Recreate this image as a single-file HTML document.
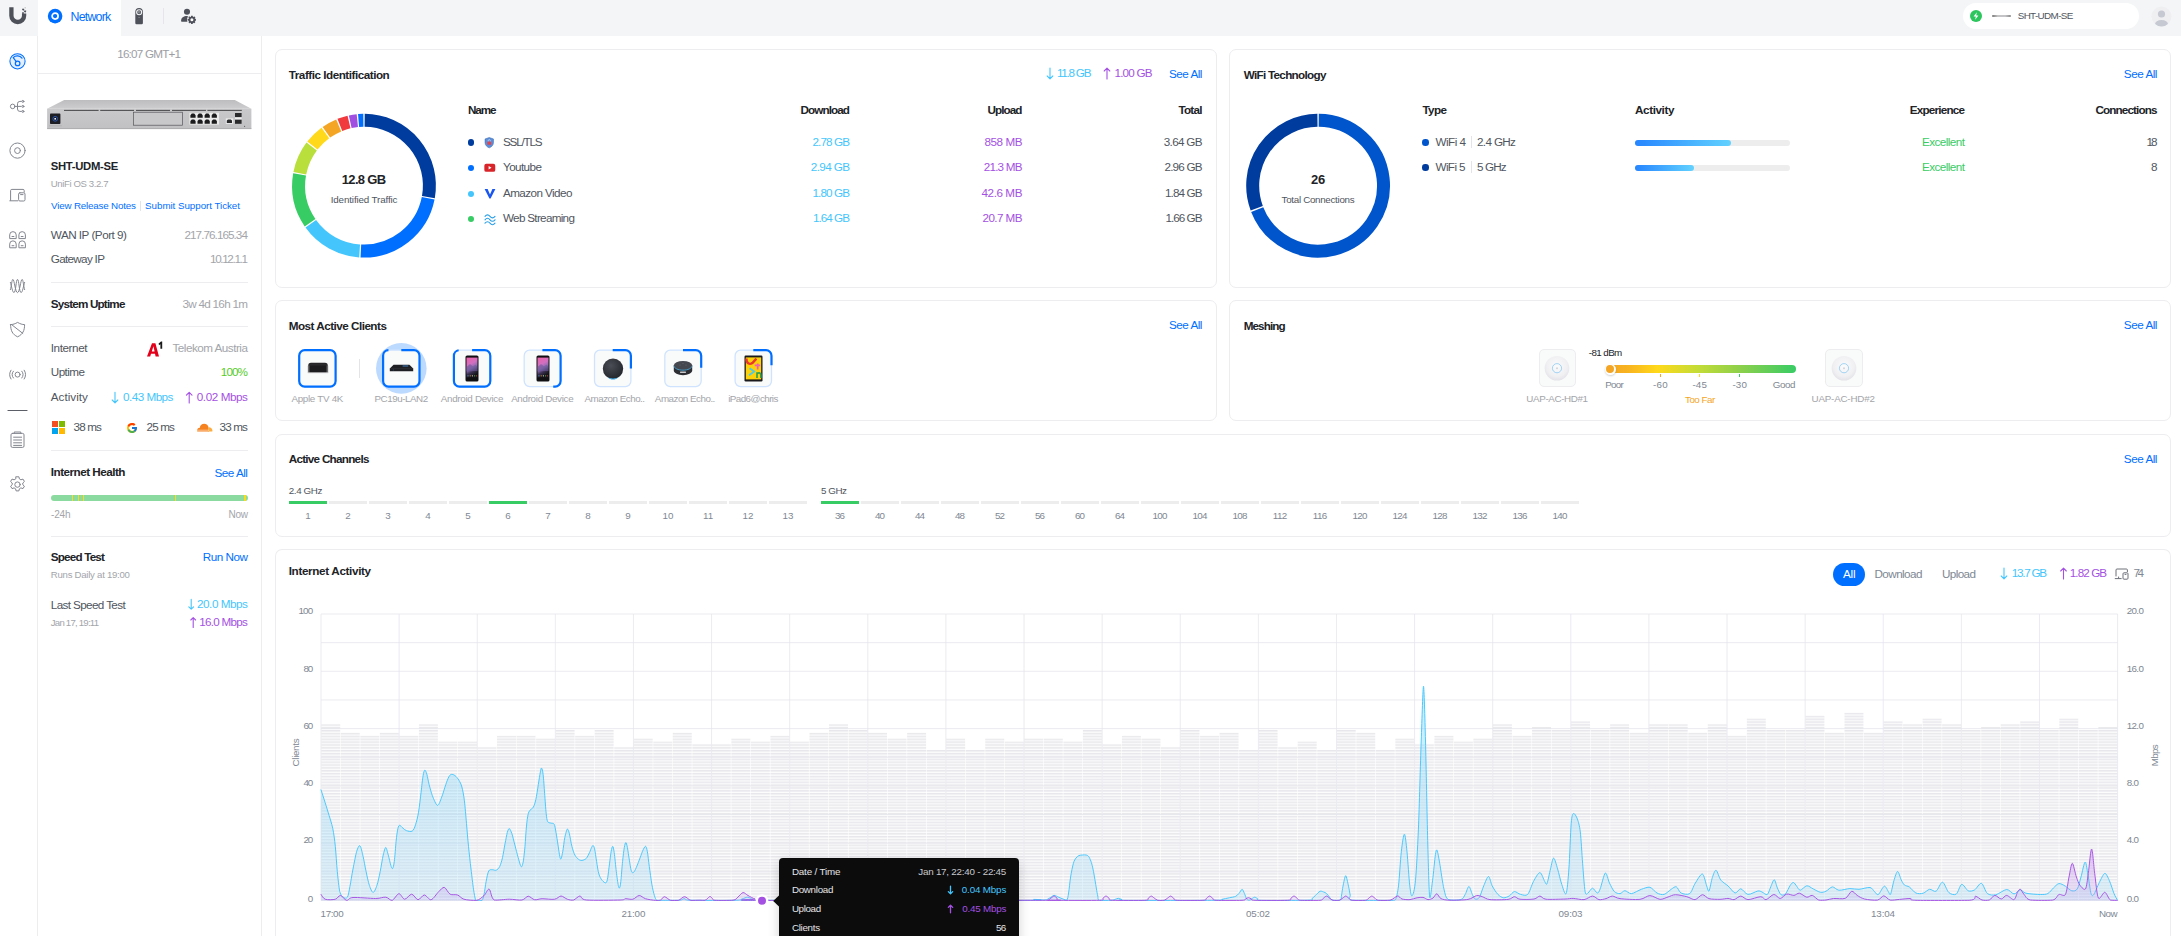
<!DOCTYPE html>
<html><head><meta charset="utf-8"><title>UniFi Network</title>
<style>
html,body{margin:0;padding:0;}
body{width:2181px;height:936px;overflow:hidden;background:#fff;position:relative;font-family:"Liberation Sans",sans-serif;}
.t{position:absolute;white-space:nowrap;line-height:1;}
.a{position:absolute;}
.card{position:absolute;border:1px solid #ededf0;border-radius:7px;box-sizing:border-box;background:#fff;}
.hr{position:absolute;height:1px;background:#ededf0;}
svg{position:absolute;overflow:visible;}
</style></head><body>
<div class="a" style="left:0;top:0;width:2181px;height:36px;background:#f4f5f7"></div>
<div class="a" style="left:38px;top:0;width:83px;height:36px;background:#fff"></div>
<svg style="left:0;top:0" width="38" height="36" viewBox="0 0 38 36">
<path d="M11.400 7.300V15.650a6.350 6.350 0 0 0 12.700 0V13.600" fill="none" stroke="#4e505a" stroke-width="4.300"/>
<rect x="22.300" y="8.700" width="1.900" height="1.700" fill="#4e505a" transform="rotate(35 23.2 9.500)"/><rect x="24.200" y="10.400" width="1.900" height="1.900" fill="#4e505a" transform="rotate(20 25.1 11.300)"/><rect x="22.100" y="12.300" width="1.800" height="1.500" fill="#4e505a"/><rect x="24.600" y="7.200" width="1.200" height="1.200" fill="#4e505a" opacity=".35"/>
</svg>
<svg style="left:46px;top:7px" width="18" height="18" viewBox="0 0 18 18"><circle cx="9.1" cy="9.1" r="7.3" fill="#006fff"/><circle cx="9.1" cy="9.1" r="3.0" fill="none" stroke="#fff" stroke-width="1.7"/></svg>
<span class="t" style="left:70.50px;top:10px;line-height:14px;height:14px;font-size:12.4px;color:#006fff;letter-spacing:-0.796px;">Network</span>
<svg style="left:132px;top:6px" width="14" height="20" viewBox="132 6 14 20"><path d="M135.300 23V11.700a3.800 3.800 0 0 1 7.600 0V23a1.200 1.200 0 0 1-1.200 1.200h-5.200a1.200 1.200 0 0 1-1.200-1.200z" fill="#4e505a"/><circle cx="139.150" cy="12.200" r="2.500" fill="none" stroke="#f4f5f7" stroke-width="1.100"/><circle cx="139.150" cy="12.200" r="0.900" fill="none" stroke="#c9cace" stroke-width=".5"/><rect x="138.200" y="17.300" width="1.900" height=".6" fill="#8a8c94"/></svg>
<div class="a" style="left:163px;top:8px;width:1px;height:16px;background:#e6e6ea"></div>
<svg style="left:179px;top:7px" width="18" height="18" viewBox="179 7 18 18"><circle cx="187" cy="11.750" r="3.050" fill="#4e505a"/><path d="M181.100 20.600c.1-2.900 2.600-4.500 5.900-4.500 1.300 0 2.400.2 3.300.7l-1.600 4.900h-7.200c-.3 0-.4-.5-.4-1.100z" fill="#4e505a"/><circle cx="191.900" cy="19.800" r="4.900" fill="#f4f5f7"/><circle cx="191.900" cy="19.800" r="3.100" fill="#4e505a"/><rect x="190.950" y="15.700" width="1.900" height="8.200" rx=".3" fill="#4e505a" transform="rotate(0 191.9 19.800)"/><rect x="190.950" y="15.700" width="1.900" height="8.200" rx=".3" fill="#4e505a" transform="rotate(45 191.9 19.800)"/><rect x="190.950" y="15.700" width="1.900" height="8.200" rx=".3" fill="#4e505a" transform="rotate(90 191.9 19.800)"/><rect x="190.950" y="15.700" width="1.900" height="8.200" rx=".3" fill="#4e505a" transform="rotate(135 191.9 19.800)"/><circle cx="191.900" cy="19.800" r="1.500" fill="#fff"/></svg>
<div class="a" style="left:1963px;top:3px;width:176px;height:26px;border-radius:13px;background:#fff"></div>
<svg style="left:1969px;top:9px" width="14" height="14" viewBox="0 0 14 14"><circle cx="7" cy="7" r="6" fill="#2cc55e"/><path d="M7.8 3.2L4.6 7.6h2.2L6.2 10.8 9.4 6.4H7.2z" fill="#fff"/></svg>
<div class="a" style="left:1992px;top:14.5px;width:19px;height:2.6px;border-radius:1px;background:linear-gradient(90deg,#777,#c4c4c6 30%,#c4c4c6 70%,#888)"></div>
<span class="t" style="left:2017.70px;top:10px;line-height:11px;height:11px;font-size:9.9px;color:#50565e;letter-spacing:-0.644px;">SHT-UDM-SE</span>
<svg style="left:2151px;top:6px" width="21" height="21" viewBox="0 0 21 21"><defs><clipPath id="av"><circle cx="10.5" cy="10.5" r="10"/></clipPath></defs><circle cx="10.5" cy="10.5" r="10" fill="#efeff2"/><g clip-path="url(#av)"><circle cx="10.5" cy="8" r="3.6" fill="#c6c9d2"/><ellipse cx="10.5" cy="18.6" rx="6.6" ry="4.6" fill="#c6c9d2"/></g></svg>
<div class="a" style="left:37px;top:36px;width:1px;height:900px;background:#ededf0"></div>
<svg style="left:0;top:36px" width="37" height="900" viewBox="0 36 37 900" fill="none" stroke="#83868f" stroke-width="1" stroke-linecap="round" stroke-linejoin="round">
<!-- dashboard (active) -->
<circle cx="17.5" cy="61.3" r="7.6" fill="#e3efff" stroke="#006fff" stroke-width="1.05"/>
<circle cx="17.6" cy="63.4" r="2.3" stroke="#006fff" stroke-width="1.2"/>
<path d="M16.2 61.6l-2.6-3.4M13.2 57.6a6 6 0 0 1 8.8 0.6" stroke="#006fff" stroke-width="1.2"/>
<!-- topology -->
<circle cx="12.700" cy="106.400" r="2.300"/><path d="M15 106.400h6M17.500 106.400v-2.600a2.400 2.400 0 0 1 2.400-2.400h1.400M17.500 106.400v2.600a2.400 2.400 0 0 0 2.400 2.400h1.400"/>
<circle cx="22.900" cy="101.400" r="1"/><circle cx="22.900" cy="106.400" r="1"/><circle cx="22.900" cy="111.400" r="1"/>
<!-- devices -->
<circle cx="17.5" cy="150.6" r="7.6"/><circle cx="17.5" cy="150.6" r="2.9"/>
<!-- clients -->
<path d="M10.600 200.400v-9.800a1.200 1.200 0 0 1 1.200-1.200h11.200a1.200 1.200 0 0 1 1.200 1.200v1.600M9.800 200.800h8"/><rect x="18.600" y="192.800" width="6.400" height="8.200" rx="1.300"/><path d="M20.600 194.600h2.400"/>
<!-- ports grid -->
<g><path d="M9.700 238.200v-3.300a3.250 3.250 0 0 1 6.500 0v3.300zM18.900 238.200v-3.300a3.250 3.250 0 0 1 6.500 0v3.300zM9.700 247.400v-3.300a3.250 3.250 0 0 1 6.500 0v3.300zM18.900 247.400v-3.300a3.250 3.250 0 0 1 6.500 0v3.300z"/><path d="M12 236.500h1.900M21.200 236.500h1.900M12 245.700h1.900M21.200 245.700h1.900"/></g>
<!-- stats waves -->
<path d="M10.400 289.600c1.200-3.600 1.400-10.200 2.500-10.200 1.400 0 2.400 13.200 4.600 13.200s3.200-13.200 4.600-13.200c1.100 0 1.300 6.600 2.500 10.200M10.400 282.400c1.200 3.600 2 10.200 3.600 10.200 1.800 0 2-13.200 3.500-13.200s1.700 13.200 3.500 13.200c1.600 0 2.400-6.600 3.600-10.200"/>
<!-- shield -->
<path d="M10.6 324.6c2.4 0 4.6-.8 7-2.2 2.4 1.4 4.600 2.200 7 2.200 0 6-1.800 9.800-7 12.200-5.200-2.400-7-6.200-7-12.200zM11.600 324.600l11.200 8.800"/>
<!-- radio -->
<circle cx="17.600" cy="374.600" r="2.500"/><path d="M13.400 371.200a5.400 5.400 0 0 0 0 6.800M11 370.200a8 8 0 0 0 0 8.800M21.800 371.200a5.400 5.400 0 0 1 0 6.800M24.200 370.200a8 8 0 0 1 0 8.800"/>
<!-- divider -->
<path d="M8 410.500h19" stroke="#5b5e66" stroke-width="1.2"/>
<!-- logs -->
<rect x="11" y="433.400" width="13" height="14" rx="1.400"/><path d="M14.200 433.400v-1.400h6.600v1.400M13.600 437.200h8M13.600 440h8M13.600 442.800h8M13.600 445.400h8"/>
<!-- settings gear -->
<circle cx="17.500" cy="484.600" r="2.700"/>
<path d="M16.100 476.800h2.800l.5 2.100 1.500.9 2.100-.7 1.400 2.400-1.600 1.500v1.700l1.600 1.500-1.400 2.400-2.100-.7-1.500.9-.5 2.100h-2.800l-.5-2.100-1.500-.9-2.100.7-1.400-2.400 1.600-1.500v-1.700l-1.600-1.500 1.400-2.400 2.100.7 1.500-.9z"/>
</svg>
<div class="a" style="left:261px;top:36px;width:1px;height:900px;background:#ededf0"></div>
<div class="hr" style="left:38px;top:73px;width:223px"></div>
<span class="t" style="left:117.20px;top:47px;line-height:13px;height:13px;font-size:11.7px;color:#9c9ea4;letter-spacing:-0.786px;">16:07 GMT+1</span>
<svg style="left:44px;top:96px" width="212" height="38" viewBox="44 96 212 38">
<defs><linearGradient id="dvt" x1="0" y1="0" x2="0" y2="1"><stop offset="0" stop-color="#bdbdbf"/><stop offset="1" stop-color="#cdcdcf"/></linearGradient>
<linearGradient id="dvf" x1="0" y1="0" x2="0" y2="1"><stop offset="0" stop-color="#c9c9cb"/><stop offset="1" stop-color="#c1c1c3"/></linearGradient></defs>
<path d="M64.200 100.100H234.800L251.400 108.700H47.100z" fill="url(#dvt)"/>
<rect x="47.100" y="108.700" width="204.300" height="20.100" fill="url(#dvf)"/>
<rect x="47.100" y="128.200" width="204.300" height="0.900" fill="#a9a9ab"/>
<g fill="#3a3a3c"><rect x="64" y="109.900" width="34.600" height="0.900"/><rect x="100.200" y="109.900" width="33.800" height="0.900"/><rect x="136" y="109.900" width="34" height="0.900"/><rect x="172" y="109.900" width="34" height="0.900"/><rect x="207.400" y="109.900" width="34.400" height="0.900"/></g>
<rect x="50" y="113.600" width="10.400" height="10.400" rx="0.800" fill="#1d1d24"/><circle cx="55.200" cy="118.800" r="2.400" fill="none" stroke="#2b5fc9" stroke-width="0.800"/><rect x="54.400" y="118" width="1.600" height="1.600" fill="#e8eefc"/>
<rect x="49.200" y="125.200" width="12.600" height="1.200" fill="#b3b3b6"/>
<rect x="133.600" y="112.200" width="49" height="13" fill="#c8c8ca" stroke="#55555a" stroke-width="0.700"/>
<rect x="189.400" y="112.800" width="29.600" height="11.800" fill="#e9e9ea"/>
<g fill="#1b1b1d"><path d="M190.400 117.800v-2.600l1.400-1.600h2.400l1.400 1.600v2.600zM197.500 117.800v-2.600l1.400-1.600h2.400l1.400 1.600v2.600zM204.600 117.800v-2.600l1.400-1.600h2.400l1.400 1.600v2.600zM211.700 117.800v-2.600l1.400-1.600h2.400l1.400 1.600v2.600z"/>
<path d="M190.400 123.700v-2.600l1.400-1.600h2.400l1.400 1.600v2.600zM197.500 123.700v-2.600l1.400-1.600h2.400l1.400 1.600v2.600zM204.600 123.700v-2.600l1.400-1.600h2.400l1.400 1.600v2.600zM211.700 123.700v-2.600l1.400-1.600h2.400l1.400 1.600v2.600z"/></g>
<rect x="225.800" y="118.400" width="7.400" height="5.400" fill="#eeeeef"/><path d="M226.800 123v-2.400l1.200-1.200h2.800l1.200 1.200v2.400z" fill="#2a2a2c"/>
<rect x="235" y="113" width="6.600" height="4" fill="#2a2a2c"/><rect x="235" y="117.600" width="6.600" height="1.400" fill="#efeff0"/><rect x="235" y="119.800" width="6.600" height="4" fill="#2a2a2c"/>
<circle cx="244.600" cy="126.200" r="0.500" fill="#333"/>
</svg>
<span class="t" style="left:50.80px;top:160px;line-height:12px;height:12px;font-size:11.3px;color:#212327;font-weight:700;letter-spacing:-0.323px;">SHT-UDM-SE</span>
<span class="t" style="left:50.80px;top:178px;line-height:11px;height:11px;font-size:9.6px;color:#a3a5aa;letter-spacing:-0.404px;">UniFi OS 3.2.7</span>
<span class="t" style="left:51.00px;top:200px;line-height:11px;height:11px;font-size:9.8px;color:#006fff;letter-spacing:-0.180px;">View Release Notes</span>
<div class="a" style="left:140px;top:201px;width:1px;height:10px;background:#e3e4e8"></div>
<span class="t" style="left:145.10px;top:200px;line-height:11px;height:11px;font-size:9.8px;color:#006fff;letter-spacing:-0.048px;">Submit Support Ticket</span>
<span class="t" style="left:50.80px;top:228px;line-height:13px;height:13px;font-size:11.7px;color:#50565e;letter-spacing:-0.501px;">WAN IP (Port 9)</span>
<span class="t" style="left:184.50px;top:228px;line-height:13px;height:13px;font-size:11.7px;color:#a3a5aa;letter-spacing:-0.943px;">217.76.165.34</span>
<span class="t" style="left:50.80px;top:252px;line-height:13px;height:13px;font-size:11.7px;color:#50565e;letter-spacing:-0.697px;">Gateway IP</span>
<span class="t" style="left:210.00px;top:252px;line-height:13px;height:13px;font-size:11.7px;color:#a3a5aa;letter-spacing:-1.349px;">10.12.1.1</span>
<div class="hr" style="left:51px;top:282px;width:197px"></div>
<span class="t" style="left:50.80px;top:297px;line-height:13px;height:13px;font-size:11.7px;color:#212327;font-weight:700;letter-spacing:-0.819px;">System Uptime</span>
<span class="t" style="left:182.50px;top:297px;line-height:13px;height:13px;font-size:11.7px;color:#a3a5aa;letter-spacing:-0.726px;">3w 4d 16h 1m</span>
<div class="hr" style="left:51px;top:326px;width:197px"></div>
<span class="t" style="left:50.80px;top:341px;line-height:13px;height:13px;font-size:11.7px;color:#50565e;letter-spacing:-0.425px;">Internet</span>
<svg style="left:146px;top:340px" width="18" height="18" viewBox="0 0 18 18"><path d="M1 16.400L6 3.200h3.400l3.600 13.200H9.600l-.6-2.600H5l-.8 2.600zM5.800 11.400h2.800L7.400 6.200z" fill="#e2001a"/><path d="M12.600 3.600l2.400-2h1.200v7.200h-1.800V4.200l-1.400 1z" fill="#1a1a1a"/></svg>
<span class="t" style="left:172.50px;top:341px;line-height:13px;height:13px;font-size:11.7px;color:#a3a5aa;letter-spacing:-0.506px;">Telekom Austria</span>
<span class="t" style="left:50.80px;top:365px;line-height:13px;height:13px;font-size:11.7px;color:#50565e;letter-spacing:-0.572px;">Uptime</span>
<span class="t" style="left:220.80px;top:365px;line-height:13px;height:13px;font-size:11.7px;color:#56cc1e;letter-spacing:-0.908px;">100%</span>
<span class="t" style="left:50.80px;top:390px;line-height:13px;height:13px;font-size:11.7px;color:#50565e;letter-spacing:0.021px;">Activity</span>
<svg style="left:0;top:0" width="1" height="1"><path d="M115 392.2V402.7M112.2 400.0L115 402.8L117.8 400.0" fill="none" stroke="#44c6fd" stroke-width="1.1" stroke-linecap="round" stroke-linejoin="round"/></svg>
<span class="t" style="left:123.00px;top:390px;line-height:13px;height:13px;font-size:11.7px;color:#44c6fd;letter-spacing:-0.516px;">0.43 Mbps</span>
<svg style="left:0;top:0" width="1" height="1"><path d="M189.2 403V392.5M186.39999999999998 395.2L189.2 392.4L192.0 395.2" fill="none" stroke="#a451e3" stroke-width="1.1" stroke-linecap="round" stroke-linejoin="round"/></svg>
<span class="t" style="left:196.80px;top:390px;line-height:13px;height:13px;font-size:11.7px;color:#a451e3;letter-spacing:-0.429px;">0.02 Mbps</span>
<svg style="left:52px;top:421px" width="13" height="13" viewBox="0 0 13 13"><rect x="0" y="0" width="6" height="6" fill="#f25022"/><rect x="7" y="0" width="6" height="6" fill="#7fba00"/><rect x="0" y="7" width="6" height="6" fill="#00a4ef"/><rect x="7" y="7" width="6" height="6" fill="#ffb900"/></svg>
<span class="t" style="left:73.50px;top:420px;line-height:13px;height:13px;font-size:11.7px;color:#50565e;letter-spacing:-0.840px;">38 ms</span>
<svg style="left:126px;top:422px" width="12" height="12" viewBox="0 0 48 48"><path fill="#FFC107" d="M43.600 20.100H42V20H24v8h11.300c-1.600 4.700-6.100 8-11.300 8-6.600 0-12-5.400-12-12s5.400-12 12-12c3.100 0 5.800 1.200 8 3l5.700-5.700C34 6.100 29.300 4 24 4 13 4 4 13 4 24s9 20 20 20 20-9 20-20c0-1.300-.1-2.700-.4-3.900z"/><path fill="#FF3D00" d="M6.300 14.700l6.600 4.800C14.700 15.100 19 12 24 12c3.100 0 5.800 1.200 8 3l5.700-5.700C34 6.100 29.300 4 24 4 16.300 4 9.700 8.300 6.300 14.700z"/><path fill="#4CAF50" d="M24 44c5.200 0 9.900-2 13.400-5.200l-6.200-5.200c-2 1.500-4.500 2.400-7.200 2.400-5.200 0-9.600-3.300-11.300-7.900l-6.500 5C9.500 39.600 16.200 44 24 44z"/><path fill="#1976D2" d="M43.600 20.100H42V20H24v8h11.300c-.8 2.200-2.200 4.200-4.100 5.600l6.200 5.200C37 39.200 44 34 44 24c0-1.300-.1-2.700-.4-3.900z"/></svg>
<span class="t" style="left:146.50px;top:420px;line-height:13px;height:13px;font-size:11.7px;color:#50565e;letter-spacing:-0.840px;">25 ms</span>
<svg style="left:196px;top:421px" width="18" height="12" viewBox="0 0 18 12"><path d="M1.200 10.400c-.6-2 .8-3.600 2.600-3.600.2-2.400 2.200-4 4.400-4 2 0 3.600 1.200 4.200 3l.6 4.600z" fill="#f6821f"/><path d="M12.600 6.200c1.800-.2 3.400 1 3.800 2.800.1.500.1 1-.1 1.400h-4.500z" fill="#fbad41"/><path d="M0.800 9.200h12.400" stroke="#fff" stroke-width="0.500"/></svg>
<span class="t" style="left:219.50px;top:420px;line-height:13px;height:13px;font-size:11.7px;color:#50565e;letter-spacing:-0.840px;">33 ms</span>
<div class="hr" style="left:51px;top:450px;width:197px"></div>
<span class="t" style="left:50.80px;top:465px;line-height:13px;height:13px;font-size:11.7px;color:#212327;font-weight:700;letter-spacing:-0.515px;">Internet Health</span>
<span class="t" style="left:214.50px;top:466px;line-height:13px;height:13px;font-size:11.7px;color:#006fff;letter-spacing:-0.488px;">See All</span>
<div class="a" style="left:51px;top:495px;width:197px;height:6px;border-radius:3px;background:#8bdba0;overflow:hidden"><i class="a" style="left:21px;top:0;width:1px;height:6px;background:#ffd91a"></i><i class="a" style="left:27px;top:0;width:1px;height:6px;background:#ffd91a"></i><i class="a" style="left:32px;top:0;width:1px;height:6px;background:#ffd91a"></i><i class="a" style="left:124px;top:0;width:1px;height:6px;background:#ffd91a"></i><i class="a" style="left:192.500px;top:0;width:2px;height:6px;background:#ffd91a"></i></div>
<span class="t" style="left:51.00px;top:509px;line-height:11px;height:11px;font-size:10px;color:#a3a5aa;letter-spacing:-0.171px;">-24h</span>
<span class="t" style="left:228.50px;top:509px;line-height:11px;height:11px;font-size:10px;color:#a3a5aa;letter-spacing:-0.252px;">Now</span>
<div class="hr" style="left:51px;top:536px;width:197px"></div>
<span class="t" style="left:50.80px;top:550px;line-height:13px;height:13px;font-size:11.7px;color:#212327;font-weight:700;letter-spacing:-0.816px;">Speed Test</span>
<span class="t" style="left:202.80px;top:550px;line-height:13px;height:13px;font-size:11.7px;color:#006fff;letter-spacing:-0.486px;">Run Now</span>
<span class="t" style="left:50.80px;top:569px;line-height:11px;height:11px;font-size:9.6px;color:#a3a5aa;letter-spacing:-0.254px;">Runs Daily at 19:00</span>
<span class="t" style="left:50.80px;top:598px;line-height:13px;height:13px;font-size:11.7px;color:#50565e;letter-spacing:-0.621px;">Last Speed Test</span>
<svg style="left:0;top:0" width="1" height="1"><path d="M191.2 599.4V609.1M188.79999999999998 606.8L191.2 609.1999999999999L193.6 606.8" fill="none" stroke="#44c6fd" stroke-width="1.1" stroke-linecap="round" stroke-linejoin="round"/></svg>
<span class="t" style="left:197.00px;top:597px;line-height:13px;height:13px;font-size:11.7px;color:#44c6fd;letter-spacing:-0.454px;">20.0 Mbps</span>
<span class="t" style="left:50.80px;top:617px;line-height:11px;height:11px;font-size:9.6px;color:#a3a5aa;letter-spacing:-0.772px;">Jan 17, 19:11</span>
<svg style="left:0;top:0" width="1" height="1"><path d="M193.2 627.4V617.6999999999999M190.79999999999998 620.0L193.2 617.6L195.6 620.0" fill="none" stroke="#a451e3" stroke-width="1.1" stroke-linecap="round" stroke-linejoin="round"/></svg>
<span class="t" style="left:199.30px;top:615px;line-height:13px;height:13px;font-size:11.7px;color:#a451e3;letter-spacing:-0.741px;">16.0 Mbps</span>
<div class="card" style="left:275px;top:49px;width:942px;height:239px;"></div>
<div class="card" style="left:1229px;top:49px;width:942px;height:239px;"></div>
<div class="card" style="left:275px;top:300px;width:942px;height:121px;"></div>
<div class="card" style="left:1229px;top:300px;width:942px;height:121px;"></div>
<div class="card" style="left:275px;top:434px;width:1896px;height:103px;"></div>
<div class="card" style="left:275px;top:549px;width:1896px;height:400px;border-bottom:none;border-radius:7px 7px 0 0;"></div>
<span class="t" style="left:288.80px;top:68px;line-height:13px;height:13px;font-size:11.7px;color:#212327;font-weight:700;letter-spacing:-0.483px;">Traffic Identification</span>
<svg style="left:0;top:0" width="1" height="1"><path d="M1050 68V78.7M1047.2 76.0L1050 78.8L1052.8 76.0" fill="none" stroke="#44c6fd" stroke-width="1.1" stroke-linecap="round" stroke-linejoin="round"/></svg>
<span class="t" style="left:1057.00px;top:66px;line-height:13px;height:13px;font-size:11.7px;color:#44c6fd;letter-spacing:-1.259px;">11.8 GB</span>
<svg style="left:0;top:0" width="1" height="1"><path d="M1107 79V68.3M1104.2 71.0L1107 68.2L1109.8 71.0" fill="none" stroke="#a451e3" stroke-width="1.1" stroke-linecap="round" stroke-linejoin="round"/></svg>
<span class="t" style="left:1114.50px;top:66px;line-height:13px;height:13px;font-size:11.7px;color:#a451e3;letter-spacing:-0.821px;">1.00 GB</span>
<span class="t" style="left:1169.00px;top:67px;line-height:13px;height:13px;font-size:11.7px;color:#006fff;letter-spacing:-0.488px;">See All</span>
<svg style="left:0;top:0" width="1" height="1" fill="none" stroke-width="13"><path d="M364.63 120.30A65.4 65.4 0 0 1 428.40 197.11" stroke="#003c9e"/><path d="M428.17 198.35A65.4 65.4 0 0 1 360.86 251.02" stroke="#006fff"/><path d="M359.61 250.95A65.4 65.4 0 0 1 310.79 223.72" stroke="#44c6fd"/><path d="M310.07 222.70A65.4 65.4 0 0 1 299.58 174.40" stroke="#38cc65"/><path d="M299.81 173.17A65.4 65.4 0 0 1 311.67 146.48" stroke="#b8df3c"/><path d="M312.43 145.48A65.4 65.4 0 0 1 325.33 132.96" stroke="#ffd91a"/><path d="M326.35 132.23A65.4 65.4 0 0 1 338.71 125.39" stroke="#f5a524"/><path d="M339.87 124.91A65.4 65.4 0 0 1 349.01 122.04" stroke="#f03a3e"/><path d="M350.24 121.76A65.4 65.4 0 0 1 357.33 120.64" stroke="#a04fe0"/><path d="M358.58 120.52A65.4 65.4 0 0 1 363.37 120.30" stroke="#006fff"/></svg>
<span class="t" style="left:341.80px;top:172px;line-height:15px;height:15px;font-size:13px;color:#212327;font-weight:700;letter-spacing:-0.668px;">12.8 GB</span>
<span class="t" style="left:330.70px;top:194px;line-height:11px;height:11px;font-size:9.8px;color:#50565e;letter-spacing:-0.129px;">Identified Traffic</span>
<span class="t" style="left:468.00px;top:103px;line-height:13px;height:13px;font-size:11.7px;color:#212327;font-weight:700;letter-spacing:-1.122px;">Name</span>
<span class="t" style="left:800.50px;top:103px;line-height:13px;height:13px;font-size:11.7px;color:#212327;font-weight:700;letter-spacing:-0.913px;">Download</span>
<span class="t" style="left:987.50px;top:103px;line-height:13px;height:13px;font-size:11.7px;color:#212327;font-weight:700;letter-spacing:-0.929px;">Upload</span>
<span class="t" style="left:1178.50px;top:103px;line-height:13px;height:13px;font-size:11.7px;color:#212327;font-weight:700;letter-spacing:-0.769px;">Total</span>
<div class="a" style="left:467.800px;top:139.25px;width:6.500px;height:6.500px;border-radius:50%;background:#003c9e"></div>
<span class="t" style="left:503.00px;top:135px;line-height:13px;height:13px;font-size:11.7px;color:#50565e;letter-spacing:-1.220px;">SSL/TLS</span>
<span class="t" style="left:812.50px;top:135px;line-height:13px;height:13px;font-size:11.7px;color:#44c6fd;letter-spacing:-0.904px;">2.78 GB</span>
<span class="t" style="left:984.50px;top:135px;line-height:13px;height:13px;font-size:11.7px;color:#a451e3;letter-spacing:-0.464px;">858 MB</span>
<span class="t" style="left:1163.80px;top:135px;line-height:13px;height:13px;font-size:11.7px;color:#50565e;letter-spacing:-0.704px;">3.64 GB</span>
<div class="a" style="left:467.800px;top:164.85px;width:6.500px;height:6.500px;border-radius:50%;background:#006fff"></div>
<span class="t" style="left:503.00px;top:160px;line-height:13px;height:13px;font-size:11.7px;color:#50565e;letter-spacing:-0.586px;">Youtube</span>
<span class="t" style="left:810.80px;top:160px;line-height:13px;height:13px;font-size:11.7px;color:#44c6fd;letter-spacing:-0.621px;">2.94 GB</span>
<span class="t" style="left:983.80px;top:160px;line-height:13px;height:13px;font-size:11.7px;color:#a451e3;letter-spacing:-0.812px;">21.3 MB</span>
<span class="t" style="left:1164.50px;top:160px;line-height:13px;height:13px;font-size:11.7px;color:#50565e;letter-spacing:-0.821px;">2.96 GB</span>
<div class="a" style="left:467.800px;top:190.55px;width:6.500px;height:6.500px;border-radius:50%;background:#44c6fd"></div>
<span class="t" style="left:503.00px;top:186px;line-height:13px;height:13px;font-size:11.7px;color:#50565e;letter-spacing:-0.580px;">Amazon Video</span>
<span class="t" style="left:812.50px;top:186px;line-height:13px;height:13px;font-size:11.7px;color:#44c6fd;letter-spacing:-0.904px;">1.80 GB</span>
<span class="t" style="left:981.50px;top:186px;line-height:13px;height:13px;font-size:11.7px;color:#a451e3;letter-spacing:-0.428px;">42.6 MB</span>
<span class="t" style="left:1165.00px;top:186px;line-height:13px;height:13px;font-size:11.7px;color:#50565e;letter-spacing:-0.904px;">1.84 GB</span>
<div class="a" style="left:467.800px;top:215.95px;width:6.500px;height:6.500px;border-radius:50%;background:#38cc65"></div>
<span class="t" style="left:503.00px;top:211px;line-height:13px;height:13px;font-size:11.7px;color:#50565e;letter-spacing:-0.701px;">Web Streaming</span>
<span class="t" style="left:813.00px;top:211px;line-height:13px;height:13px;font-size:11.7px;color:#44c6fd;letter-spacing:-0.987px;">1.64 GB</span>
<span class="t" style="left:982.50px;top:211px;line-height:13px;height:13px;font-size:11.7px;color:#a451e3;letter-spacing:-0.595px;">20.7 MB</span>
<span class="t" style="left:1165.50px;top:211px;line-height:13px;height:13px;font-size:11.7px;color:#50565e;letter-spacing:-0.987px;">1.66 GB</span>
<svg style="left:484.300px;top:136.600px" width="10.500" height="11.400" viewBox="0 0 12 13"><path d="M6 .6l4.800 1.600v4.200c0 3-2.200 5-4.800 6-2.600-1-4.800-3-4.800-6V2.200z" fill="#5b8fd9" stroke="#2f5fae" stroke-width=".6"/><rect x="3.800" y="5" width="4.400" height="3.800" rx=".6" fill="#e0454b"/><path d="M4.800 5V4.200a1.200 1.200 0 0 1 2.400 0V5" fill="none" stroke="#e8e8f0" stroke-width=".7"/></svg>
<svg style="left:483.700px;top:163.300px" width="11.600" height="9.600" viewBox="0 0 12 10"><rect x=".3" y=".8" width="11.400" height="8.400" rx="2" fill="#d9252a"/><path d="M4.800 3.200l3 1.800-3 1.800z" fill="#fff"/></svg>
<svg style="left:483.500px;top:188px" width="12" height="11" viewBox="0 0 12 11"><path d="M.6 1h3L6 6.600 8.400 1h3L6.600 10.400H5.400z" fill="#1a56f0"/></svg>
<svg style="left:483.500px;top:212.500px" width="12" height="13" viewBox="0 0 12 13" fill="none" stroke="#2a9fe8" stroke-width="1.100" stroke-linecap="round"><path d="M1 3.400c1.600-2 3.400-2 5 0s3.400 2 5 0M1 6.800c1.600-2 3.400-2 5 0s3.400 2 5 0M1 10.200c1.600-2 3.400-2 5 0s3.400 2 5 0"/></svg>
<span class="t" style="left:1243.70px;top:68px;line-height:13px;height:13px;font-size:11.7px;color:#212327;font-weight:700;letter-spacing:-0.701px;">WiFi Technology</span>
<span class="t" style="left:2123.80px;top:67px;line-height:13px;height:13px;font-size:11.7px;color:#006fff;letter-spacing:-0.454px;">See All</span>
<svg style="left:0;top:0" width="1" height="1" fill="none" stroke-width="13"><path d="M1318.73 120.30A65.4 65.4 0 1 1 1257.19 209.51" stroke="#0055cc"/><path d="M1256.74 208.34A65.4 65.4 0 0 1 1317.47 120.30" stroke="#003c9e"/></svg>
<span class="t" style="left:1311.00px;top:172px;line-height:15px;height:15px;font-size:13px;color:#212327;font-weight:700;letter-spacing:-0.258px;">26</span>
<span class="t" style="left:1281.60px;top:194px;line-height:11px;height:11px;font-size:9.8px;color:#50565e;letter-spacing:-0.306px;">Total Connections</span>
<span class="t" style="left:1422.50px;top:103px;line-height:13px;height:13px;font-size:11.7px;color:#212327;font-weight:700;letter-spacing:-0.646px;">Type</span>
<span class="t" style="left:1635.00px;top:103px;line-height:13px;height:13px;font-size:11.7px;color:#212327;font-weight:700;letter-spacing:-0.394px;">Activity</span>
<span class="t" style="left:1909.80px;top:103px;line-height:13px;height:13px;font-size:11.7px;color:#212327;font-weight:700;letter-spacing:-0.804px;">Experience</span>
<span class="t" style="left:2095.50px;top:103px;line-height:13px;height:13px;font-size:11.7px;color:#212327;font-weight:700;letter-spacing:-0.885px;">Connections</span>
<div class="a" style="left:1422px;top:139.2px;width:6.500px;height:6.500px;border-radius:50%;background:#0055cc"></div>
<span class="t" style="left:1435.50px;top:135px;line-height:13px;height:13px;font-size:11.7px;color:#50565e;letter-spacing:-0.529px;">WiFi 4</span>
<div class="a" style="left:1471px;top:136.3px;width:1px;height:12px;background:#e3e4e8"></div>
<span class="t" style="left:1477.00px;top:135px;line-height:13px;height:13px;font-size:11.7px;color:#50565e;letter-spacing:-0.652px;">2.4 GHz</span>
<div class="a" style="left:1635px;top:139.7px;width:155px;height:6px;border-radius:3px;background:#ededed"><i class="a" style="left:0;top:0;height:6px;width:95.7px;border-radius:3px;background:linear-gradient(90deg,#2685ff,#62d2ff)"></i></div>
<span class="t" style="left:1922.00px;top:135px;line-height:13px;height:13px;font-size:11.7px;color:#38cc65;letter-spacing:-0.559px;">Excellent</span>
<span class="t" style="left:2146.50px;top:135px;line-height:13px;height:13px;font-size:11.7px;color:#50565e;letter-spacing:-2.013px;">18</span>
<div class="a" style="left:1422px;top:164.2px;width:6.500px;height:6.500px;border-radius:50%;background:#003c9e"></div>
<span class="t" style="left:1435.50px;top:160px;line-height:13px;height:13px;font-size:11.7px;color:#50565e;letter-spacing:-0.629px;">WiFi 5</span>
<div class="a" style="left:1471px;top:161.3px;width:1px;height:12px;background:#e3e4e8"></div>
<span class="t" style="left:1477.00px;top:160px;line-height:13px;height:13px;font-size:11.7px;color:#50565e;letter-spacing:-0.864px;">5 GHz</span>
<div class="a" style="left:1635px;top:164.7px;width:155px;height:6px;border-radius:3px;background:#ededed"><i class="a" style="left:0;top:0;height:6px;width:58.7px;border-radius:3px;background:linear-gradient(90deg,#2685ff,#62d2ff)"></i></div>
<span class="t" style="left:1922.00px;top:160px;line-height:13px;height:13px;font-size:11.7px;color:#38cc65;letter-spacing:-0.559px;">Excellent</span>
<span class="t" style="left:2150.99px;top:160px;line-height:13px;height:13px;font-size:11.7px;color:#50565e;">8</span>
<span class="t" style="left:288.70px;top:319px;line-height:13px;height:13px;font-size:11.7px;color:#212327;font-weight:700;letter-spacing:-0.510px;">Most Active Clients</span>
<span class="t" style="left:1169.00px;top:318px;line-height:13px;height:13px;font-size:11.7px;color:#006fff;letter-spacing:-0.488px;">See All</span>
<svg style="left:0;top:0" width="1" height="1"><path d="M317.4 350.2H330.09999999999997A5.5 5.5 0 0 1 335.59999999999997 355.7V381.09999999999997A5.5 5.5 0 0 1 330.09999999999997 386.59999999999997H304.7A5.5 5.5 0 0 1 299.2 381.09999999999997V355.7A5.5 5.5 0 0 1 304.7 350.2Z" fill="#f9fafa" stroke="#cfe3ff" stroke-width="1.300"/><path d="M317.4 350.2H330.09999999999997A5.5 5.5 0 0 1 335.59999999999997 355.7V381.09999999999997A5.5 5.5 0 0 1 330.09999999999997 386.59999999999997H304.7A5.5 5.5 0 0 1 299.2 381.09999999999997V355.7A5.5 5.5 0 0 1 304.7 350.2Z" fill="none" stroke="#006fff" stroke-width="2.200" pathLength="100" stroke-dasharray="100.0 200"/></svg>
<svg style="left:0;top:0" width="1" height="1"><circle cx="401.3" cy="368.4" r="25.300" fill="#bcd9ff"/><path d="M401.3 350.2H414.0A5.5 5.5 0 0 1 419.5 355.7V381.09999999999997A5.5 5.5 0 0 1 414.0 386.59999999999997H388.6A5.5 5.5 0 0 1 383.1 381.09999999999997V355.7A5.5 5.5 0 0 1 388.6 350.2Z" fill="#f9fafa" stroke="#cfe3ff" stroke-width="1.300"/><path d="M401.3 350.2H414.0A5.5 5.5 0 0 1 419.5 355.7V381.09999999999997A5.5 5.5 0 0 1 414.0 386.59999999999997H388.6A5.5 5.5 0 0 1 383.1 381.09999999999997V355.7A5.5 5.5 0 0 1 388.6 350.2Z" fill="none" stroke="#006fff" stroke-width="2.200" pathLength="100" stroke-dasharray="90.5 200"/></svg>
<svg style="left:0;top:0" width="1" height="1"><path d="M472.1 350.2H484.8A5.5 5.5 0 0 1 490.3 355.7V381.09999999999997A5.5 5.5 0 0 1 484.8 386.59999999999997H459.40000000000003A5.5 5.5 0 0 1 453.90000000000003 381.09999999999997V355.7A5.5 5.5 0 0 1 459.40000000000003 350.2Z" fill="#f9fafa" stroke="#cfe3ff" stroke-width="1.300"/><path d="M472.1 350.2H484.8A5.5 5.5 0 0 1 490.3 355.7V381.09999999999997A5.5 5.5 0 0 1 484.8 386.59999999999997H459.40000000000003A5.5 5.5 0 0 1 453.90000000000003 381.09999999999997V355.7A5.5 5.5 0 0 1 459.40000000000003 350.2Z" fill="none" stroke="#006fff" stroke-width="2.200" pathLength="100" stroke-dasharray="90.0 200"/></svg>
<svg style="left:0;top:0" width="1" height="1"><path d="M542.4 350.2H555.1A5.5 5.5 0 0 1 560.6 355.7V381.09999999999997A5.5 5.5 0 0 1 555.1 386.59999999999997H529.6999999999999A5.5 5.5 0 0 1 524.1999999999999 381.09999999999997V355.7A5.5 5.5 0 0 1 529.6999999999999 350.2Z" fill="#f9fafa" stroke="#cfe3ff" stroke-width="1.300"/><path d="M542.4 350.2H555.1A5.5 5.5 0 0 1 560.6 355.7V381.09999999999997A5.5 5.5 0 0 1 555.1 386.59999999999997H529.6999999999999A5.5 5.5 0 0 1 524.1999999999999 381.09999999999997V355.7A5.5 5.5 0 0 1 529.6999999999999 350.2Z" fill="none" stroke="#006fff" stroke-width="2.200" pathLength="100" stroke-dasharray="42.0 200"/></svg>
<svg style="left:0;top:0" width="1" height="1"><path d="M612.7 350.2H625.4000000000001A5.5 5.5 0 0 1 630.9000000000001 355.7V381.09999999999997A5.5 5.5 0 0 1 625.4000000000001 386.59999999999997H600.0A5.5 5.5 0 0 1 594.5 381.09999999999997V355.7A5.5 5.5 0 0 1 600.0 350.2Z" fill="#f9fafa" stroke="#cfe3ff" stroke-width="1.300"/><path d="M612.7 350.2H625.4000000000001A5.5 5.5 0 0 1 630.9000000000001 355.7V381.09999999999997A5.5 5.5 0 0 1 625.4000000000001 386.59999999999997H600.0A5.5 5.5 0 0 1 594.5 381.09999999999997V355.7A5.5 5.5 0 0 1 600.0 350.2Z" fill="none" stroke="#006fff" stroke-width="2.200" pathLength="100" stroke-dasharray="25.0 200"/></svg>
<svg style="left:0;top:0" width="1" height="1"><path d="M683 350.2H695.7A5.5 5.5 0 0 1 701.2 355.7V381.09999999999997A5.5 5.5 0 0 1 695.7 386.59999999999997H670.3A5.5 5.5 0 0 1 664.8 381.09999999999997V355.7A5.5 5.5 0 0 1 670.3 350.2Z" fill="#f9fafa" stroke="#cfe3ff" stroke-width="1.300"/><path d="M683 350.2H695.7A5.5 5.5 0 0 1 701.2 355.7V381.09999999999997A5.5 5.5 0 0 1 695.7 386.59999999999997H670.3A5.5 5.5 0 0 1 664.8 381.09999999999997V355.7A5.5 5.5 0 0 1 670.3 350.2Z" fill="none" stroke="#006fff" stroke-width="2.200" pathLength="100" stroke-dasharray="24.5 200"/></svg>
<svg style="left:0;top:0" width="1" height="1"><path d="M753.3 350.2H766.0A5.5 5.5 0 0 1 771.5 355.7V381.09999999999997A5.5 5.5 0 0 1 766.0 386.59999999999997H740.5999999999999A5.5 5.5 0 0 1 735.0999999999999 381.09999999999997V355.7A5.5 5.5 0 0 1 740.5999999999999 350.2Z" fill="#f9fafa" stroke="#cfe3ff" stroke-width="1.300"/><path d="M753.3 350.2H766.0A5.5 5.5 0 0 1 771.5 355.7V381.09999999999997A5.5 5.5 0 0 1 766.0 386.59999999999997H740.5999999999999A5.5 5.5 0 0 1 735.0999999999999 381.09999999999997V355.7A5.5 5.5 0 0 1 740.5999999999999 350.2Z" fill="none" stroke="#006fff" stroke-width="2.200" pathLength="100" stroke-dasharray="22.7 200"/></svg>
<div class="a" style="left:359px;top:359px;width:1px;height:19px;background:#e3e4e8"></div>
<span class="t" style="left:291.40px;top:393px;line-height:11px;height:11px;font-size:9.8px;color:#a3a5aa;letter-spacing:-0.284px;">Apple TV 4K</span>
<span class="t" style="left:374.45px;top:393px;line-height:11px;height:11px;font-size:9.8px;color:#a3a5aa;letter-spacing:-0.449px;">PC19u-LAN2</span>
<span class="t" style="left:440.85px;top:393px;line-height:11px;height:11px;font-size:9.8px;color:#a3a5aa;letter-spacing:-0.304px;">Android Device</span>
<span class="t" style="left:511.15px;top:393px;line-height:11px;height:11px;font-size:9.8px;color:#a3a5aa;letter-spacing:-0.304px;">Android Device</span>
<span class="t" style="left:584.55px;top:393px;line-height:11px;height:11px;font-size:9.8px;color:#a3a5aa;letter-spacing:-0.496px;">Amazon Echo..</span>
<span class="t" style="left:654.85px;top:393px;line-height:11px;height:11px;font-size:9.8px;color:#a3a5aa;letter-spacing:-0.496px;">Amazon Echo..</span>
<span class="t" style="left:728.20px;top:393px;line-height:11px;height:11px;font-size:9.8px;color:#a3a5aa;letter-spacing:-0.550px;">iPad6@chris</span>
<svg style="left:306.500px;top:361px" width="22" height="14" viewBox="0 0 22 14"><defs><linearGradient id="atv" x1="0" y1="0" x2="1" y2="0"><stop offset="0" stop-color="#8a8a8c"/><stop offset=".12" stop-color="#1c1c1e"/><stop offset=".88" stop-color="#1c1c1e"/><stop offset="1" stop-color="#8a8a8c"/></linearGradient></defs><path d="M.8 5.400C1 2.600 2 1.800 4 1.800h14c2 0 3 .8 3.200 3.600V11.800H.8z" fill="url(#atv)"/><path d="M1.600 4.400C2 2.800 2.800 2.200 4.200 2.200h13.600c1.400 0 2.200.6 2.600 2.200z" fill="#2a2a2d"/><rect x=".8" y="11.400" width="20.400" height=".8" fill="#c9c9cb"/></svg>
<svg style="left:389px;top:363.500px" width="25" height="9" viewBox="0 0 25 9"><path d="M4.600.8h15.800l3.800 3.600v2.800H.8V4.400z" fill="#1d1f22"/><rect x="13.600" y="1.400" width="5.600" height="1.200" fill="#3a6ea8"/><rect x=".8" y="4.600" width="23.400" height=".5" fill="#3a3d42"/><circle cx="4.400" cy="5.900" r=".4" fill="#3b7be0"/></svg>
<svg style="left:465.2px;top:355px" width="14" height="27" viewBox="0 0 14 27"><defs><linearGradient id="ph465" x1="0" y1="0" x2="0.300" y2="1"><stop offset="0" stop-color="#f060a8"/><stop offset=".4" stop-color="#d070c0"/><stop offset=".62" stop-color="#8a6ab0"/><stop offset=".8" stop-color="#3a3050"/><stop offset="1" stop-color="#15151a"/></linearGradient></defs><rect x=".5" y=".5" width="13" height="26" rx="1.600" fill="#101013"/><rect x="1.500" y="2.600" width="11" height="20" fill="url(#ph465)"/><path d="M1.500 12l3.500-3 3 2.600 2.400-1.800 2.100 1.700v4.500h-11z" fill="#6a5a9a" opacity=".6"/><g><circle cx="3" cy="20.800" r=".6" fill="#4ab0f0"/><circle cx="5.200" cy="20.800" r=".6" fill="#f0a030"/><circle cx="7.400" cy="20.800" r=".6" fill="#e8e8e8"/><circle cx="9.600" cy="20.800" r=".6" fill="#50c060"/><circle cx="11.400" cy="20.800" r=".6" fill="#e04040"/></g></svg>
<svg style="left:535.5px;top:355px" width="14" height="27" viewBox="0 0 14 27"><defs><linearGradient id="ph535" x1="0" y1="0" x2="0.300" y2="1"><stop offset="0" stop-color="#f060a8"/><stop offset=".4" stop-color="#d070c0"/><stop offset=".62" stop-color="#8a6ab0"/><stop offset=".8" stop-color="#3a3050"/><stop offset="1" stop-color="#15151a"/></linearGradient></defs><rect x=".5" y=".5" width="13" height="26" rx="1.600" fill="#101013"/><rect x="1.500" y="2.600" width="11" height="20" fill="url(#ph535)"/><path d="M1.500 12l3.500-3 3 2.600 2.400-1.800 2.100 1.700v4.500h-11z" fill="#6a5a9a" opacity=".6"/><g><circle cx="3" cy="20.800" r=".6" fill="#4ab0f0"/><circle cx="5.200" cy="20.800" r=".6" fill="#f0a030"/><circle cx="7.400" cy="20.800" r=".6" fill="#e8e8e8"/><circle cx="9.600" cy="20.800" r=".6" fill="#50c060"/><circle cx="11.400" cy="20.800" r=".6" fill="#e04040"/></g></svg>
<svg style="left:601.500px;top:357.500px" width="22" height="22" viewBox="0 0 22 22"><defs><radialGradient id="e4" cx=".4" cy=".35" r=".75"><stop offset="0" stop-color="#4a4d55"/><stop offset="1" stop-color="#202228"/></radialGradient></defs><circle cx="11" cy="10.800" r="10.200" fill="url(#e4)"/><path d="M5.600 19.200c3.400 1.600 7.400 1.600 10.800 0-1.600 1.700-3.400 2.300-5.400 2.300s-3.800-.6-5.400-2.300z" fill="#2a9fe0"/></svg>
<svg style="left:673px;top:360px" width="20" height="16" viewBox="0 0 20 16"><path d="M.8 5.600v5c0 2.600 4.100 4.600 9.200 4.600s9.200-2 9.200-4.600v-5z" fill="#2c2e34"/><ellipse cx="10" cy="5.600" rx="9.200" ry="4.600" fill="#45484f"/><path d="M.8 5.800c.4 2.500 4.300 4.400 9.200 4.400s8.800-1.900 9.200-4.400" fill="none" stroke="#4ab4e8" stroke-width=".8"/><rect x="7" y="11.600" width="6" height="1.400" rx=".4" fill="#c9c9cb"/><circle cx="10" cy="3.400" r=".5" fill="#6a6d75"/><circle cx="7" cy="5" r=".5" fill="#6a6d75"/><circle cx="13" cy="5" r=".5" fill="#6a6d75"/></svg>
<svg style="left:744px;top:355px" width="19" height="27" viewBox="0 0 19 27"><rect x=".5" y=".5" width="18" height="26" rx="1.200" fill="#1a1a1c"/><rect x="1.800" y="2.400" width="15.400" height="22" fill="#fdd20a"/><path d="M2.400 3.400c0 5 3 6.600 6 4.600l4-4.400" fill="none" stroke="#e8382c" stroke-width="2.400"/><path d="M10.600 10.400h5.600M13.600 8.600v5.800" stroke="#f060b0" stroke-width="1.800"/><path d="M5.600 13.200l4.600 3.400-5.200 3.600" fill="none" stroke="#50c8e8" stroke-width="1.800"/><path d="M13 17.200v5.800M13.400 18.400c1.800-1.200 3.400-.4 3.400 1.600v3" fill="none" stroke="#2aa050" stroke-width="1.600"/></svg>
<span class="t" style="left:1243.70px;top:319px;line-height:13px;height:13px;font-size:11.7px;color:#212327;font-weight:700;letter-spacing:-0.908px;">Meshing</span>
<span class="t" style="left:2123.80px;top:318px;line-height:13px;height:13px;font-size:11.7px;color:#006fff;letter-spacing:-0.454px;">See All</span>
<div class="a" style="left:1538.6px;top:349px;width:37.500px;height:38px;box-sizing:border-box;border:1px solid #ededf0;border-radius:5px;background:#f9fafa"></div>
<svg style="left:1544.1px;top:354.700px" width="26" height="26" viewBox="0 0 26 26"><defs><radialGradient id="ap1538" cx=".5" cy=".42" r=".6"><stop offset="0" stop-color="#fbfbfc"/><stop offset=".7" stop-color="#f0f0f3"/><stop offset="1" stop-color="#e2e2e7"/></radialGradient></defs><circle cx="13" cy="13.200" r="12.300" fill="url(#ap1538)"/><circle cx="13" cy="13.200" r="4.600" fill="none" stroke="#7cc4f0" stroke-width=".7"/><circle cx="13" cy="13.200" r="1" fill="#d0d4da"/></svg>
<div class="a" style="left:1825px;top:349px;width:37.500px;height:38px;box-sizing:border-box;border:1px solid #ededf0;border-radius:5px;background:#f9fafa"></div>
<svg style="left:1830.5px;top:354.700px" width="26" height="26" viewBox="0 0 26 26"><defs><radialGradient id="ap1825" cx=".5" cy=".42" r=".6"><stop offset="0" stop-color="#fbfbfc"/><stop offset=".7" stop-color="#f0f0f3"/><stop offset="1" stop-color="#e2e2e7"/></radialGradient></defs><circle cx="13" cy="13.200" r="12.300" fill="url(#ap1825)"/><circle cx="13" cy="13.200" r="4.600" fill="none" stroke="#7cc4f0" stroke-width=".7"/><circle cx="13" cy="13.200" r="1" fill="#d0d4da"/></svg>
<span class="t" style="left:1526.35px;top:393px;line-height:11px;height:11px;font-size:9.8px;color:#a3a5aa;letter-spacing:-0.365px;">UAP-AC-HD#1</span>
<span class="t" style="left:1811.50px;top:393px;line-height:11px;height:11px;font-size:9.8px;color:#a3a5aa;letter-spacing:-0.195px;">UAP-AC-HD#2</span>
<span class="t" style="left:1588.70px;top:347px;line-height:11px;height:11px;font-size:9.8px;color:#212327;letter-spacing:-0.572px;">-81 dBm</span>
<div class="a" style="left:1605.600px;top:365px;width:190.400px;height:8px;border-radius:4px;background:linear-gradient(90deg,#f5a524 0%,#f8b420 12%,#ffd91a 27%,#c4dc36 48%,#8ed04a 70%,#38cc65 100%)"></div>
<div class="a" style="left:1604.500px;top:363.500px;width:11px;height:11px;border-radius:50%;background:#fff;box-shadow:0 1px 2px rgba(0,0,0,.18)"></div>
<div class="a" style="left:1605.700px;top:364.700px;width:8.600px;height:8.600px;border-radius:50%;background:#f5a524"></div>
<div class="a" style="left:1659.7px;top:373.800px;width:1.200px;height:2.800px;background:#f5a524"></div>
<div class="a" style="left:1699.1000000000001px;top:373.800px;width:1.200px;height:2.800px;background:#ffd91a"></div>
<div class="a" style="left:1739.1000000000001px;top:373.800px;width:1.200px;height:2.800px;background:#38cc65"></div>
<span class="t" style="left:1605.20px;top:379px;line-height:11px;height:11px;font-size:9.8px;color:#808893;letter-spacing:-0.700px;">Poor</span>
<span class="t" style="left:1653.00px;top:379px;line-height:11px;height:11px;font-size:9.8px;color:#808893;letter-spacing:0.219px;">-60</span>
<span class="t" style="left:1692.40px;top:379px;line-height:11px;height:11px;font-size:9.8px;color:#808893;letter-spacing:0.219px;">-45</span>
<span class="t" style="left:1732.40px;top:379px;line-height:11px;height:11px;font-size:9.8px;color:#808893;letter-spacing:0.219px;">-30</span>
<span class="t" style="left:1772.70px;top:379px;line-height:11px;height:11px;font-size:9.8px;color:#808893;letter-spacing:-0.424px;">Good</span>
<span class="t" style="left:1685.00px;top:394px;line-height:11px;height:11px;font-size:9.8px;color:#f5a524;letter-spacing:-0.503px;">Too Far</span>
<span class="t" style="left:288.70px;top:452px;line-height:13px;height:13px;font-size:11.7px;color:#212327;font-weight:700;letter-spacing:-0.730px;">Active Channels</span>
<span class="t" style="left:2123.80px;top:452px;line-height:13px;height:13px;font-size:11.7px;color:#006fff;letter-spacing:-0.454px;">See All</span>
<span class="t" style="left:288.70px;top:485px;line-height:11px;height:11px;font-size:9.8px;color:#50565e;letter-spacing:-0.357px;">2.4 GHz</span>
<span class="t" style="left:821.00px;top:485px;line-height:11px;height:11px;font-size:9.8px;color:#50565e;letter-spacing:-0.443px;">5 GHz</span>
<svg style="left:0;top:0" width="1" height="1"><rect x="289" y="501" width="38" height="3" fill="#38cc65"/><rect x="329" y="501" width="38" height="3" fill="#ededed"/><rect x="369" y="501" width="38" height="3" fill="#ededed"/><rect x="409" y="501" width="38" height="3" fill="#ededed"/><rect x="449" y="501" width="38" height="3" fill="#ededed"/><rect x="489" y="501" width="38" height="3" fill="#38cc65"/><rect x="529" y="501" width="38" height="3" fill="#ededed"/><rect x="569" y="501" width="38" height="3" fill="#ededed"/><rect x="609" y="501" width="38" height="3" fill="#ededed"/><rect x="649" y="501" width="38" height="3" fill="#ededed"/><rect x="689" y="501" width="38" height="3" fill="#ededed"/><rect x="729" y="501" width="38" height="3" fill="#ededed"/><rect x="769" y="501" width="38" height="3" fill="#ededed"/><rect x="821" y="501" width="38" height="3" fill="#38cc65"/><rect x="861" y="501" width="38" height="3" fill="#ededed"/><rect x="901" y="501" width="38" height="3" fill="#ededed"/><rect x="941" y="501" width="38" height="3" fill="#ededed"/><rect x="981" y="501" width="38" height="3" fill="#ededed"/><rect x="1021" y="501" width="38" height="3" fill="#ededed"/><rect x="1061" y="501" width="38" height="3" fill="#ededed"/><rect x="1101" y="501" width="38" height="3" fill="#ededed"/><rect x="1141" y="501" width="38" height="3" fill="#ededed"/><rect x="1181" y="501" width="38" height="3" fill="#ededed"/><rect x="1221" y="501" width="38" height="3" fill="#ededed"/><rect x="1261" y="501" width="38" height="3" fill="#ededed"/><rect x="1301" y="501" width="38" height="3" fill="#ededed"/><rect x="1341" y="501" width="38" height="3" fill="#ededed"/><rect x="1381" y="501" width="38" height="3" fill="#ededed"/><rect x="1421" y="501" width="38" height="3" fill="#ededed"/><rect x="1461" y="501" width="38" height="3" fill="#ededed"/><rect x="1501" y="501" width="38" height="3" fill="#ededed"/><rect x="1541" y="501" width="38" height="3" fill="#ededed"/></svg>
<span class="t" style="left:305.28px;top:510px;line-height:11px;height:11px;font-size:9.8px;color:#808893;">1</span>
<span class="t" style="left:345.28px;top:510px;line-height:11px;height:11px;font-size:9.8px;color:#808893;">2</span>
<span class="t" style="left:385.28px;top:510px;line-height:11px;height:11px;font-size:9.8px;color:#808893;">3</span>
<span class="t" style="left:425.28px;top:510px;line-height:11px;height:11px;font-size:9.8px;color:#808893;">4</span>
<span class="t" style="left:465.28px;top:510px;line-height:11px;height:11px;font-size:9.8px;color:#808893;">5</span>
<span class="t" style="left:505.28px;top:510px;line-height:11px;height:11px;font-size:9.8px;color:#808893;">6</span>
<span class="t" style="left:545.28px;top:510px;line-height:11px;height:11px;font-size:9.8px;color:#808893;">7</span>
<span class="t" style="left:585.28px;top:510px;line-height:11px;height:11px;font-size:9.8px;color:#808893;">8</span>
<span class="t" style="left:625.28px;top:510px;line-height:11px;height:11px;font-size:9.8px;color:#808893;">9</span>
<span class="t" style="left:662.55px;top:510px;line-height:11px;height:11px;font-size:9.8px;color:#808893;">10</span>
<span class="t" style="left:702.91px;top:510px;line-height:11px;height:11px;font-size:9.8px;color:#808893;">11</span>
<span class="t" style="left:742.55px;top:510px;line-height:11px;height:11px;font-size:9.8px;color:#808893;">12</span>
<span class="t" style="left:782.55px;top:510px;line-height:11px;height:11px;font-size:9.8px;color:#808893;">13</span>
<span class="t" style="left:834.99px;top:510px;line-height:11px;height:11px;font-size:9.8px;color:#808893;letter-spacing:-0.872px;">36</span>
<span class="t" style="left:874.99px;top:510px;line-height:11px;height:11px;font-size:9.8px;color:#808893;letter-spacing:-0.872px;">40</span>
<span class="t" style="left:914.99px;top:510px;line-height:11px;height:11px;font-size:9.8px;color:#808893;letter-spacing:-0.872px;">44</span>
<span class="t" style="left:954.99px;top:510px;line-height:11px;height:11px;font-size:9.8px;color:#808893;letter-spacing:-0.872px;">48</span>
<span class="t" style="left:994.99px;top:510px;line-height:11px;height:11px;font-size:9.8px;color:#808893;letter-spacing:-0.872px;">52</span>
<span class="t" style="left:1034.99px;top:510px;line-height:11px;height:11px;font-size:9.8px;color:#808893;letter-spacing:-0.872px;">56</span>
<span class="t" style="left:1074.99px;top:510px;line-height:11px;height:11px;font-size:9.8px;color:#808893;letter-spacing:-0.872px;">60</span>
<span class="t" style="left:1114.99px;top:510px;line-height:11px;height:11px;font-size:9.8px;color:#808893;letter-spacing:-0.872px;">64</span>
<span class="t" style="left:1152.48px;top:510px;line-height:11px;height:11px;font-size:9.8px;color:#808893;letter-spacing:-0.654px;">100</span>
<span class="t" style="left:1192.48px;top:510px;line-height:11px;height:11px;font-size:9.8px;color:#808893;letter-spacing:-0.654px;">104</span>
<span class="t" style="left:1232.48px;top:510px;line-height:11px;height:11px;font-size:9.8px;color:#808893;letter-spacing:-0.654px;">108</span>
<span class="t" style="left:1272.81px;top:510px;line-height:11px;height:11px;font-size:9.8px;color:#808893;letter-spacing:-0.625px;">112</span>
<span class="t" style="left:1312.81px;top:510px;line-height:11px;height:11px;font-size:9.8px;color:#808893;letter-spacing:-0.625px;">116</span>
<span class="t" style="left:1352.48px;top:510px;line-height:11px;height:11px;font-size:9.8px;color:#808893;letter-spacing:-0.654px;">120</span>
<span class="t" style="left:1392.48px;top:510px;line-height:11px;height:11px;font-size:9.8px;color:#808893;letter-spacing:-0.654px;">124</span>
<span class="t" style="left:1432.48px;top:510px;line-height:11px;height:11px;font-size:9.8px;color:#808893;letter-spacing:-0.654px;">128</span>
<span class="t" style="left:1472.48px;top:510px;line-height:11px;height:11px;font-size:9.8px;color:#808893;letter-spacing:-0.654px;">132</span>
<span class="t" style="left:1512.48px;top:510px;line-height:11px;height:11px;font-size:9.8px;color:#808893;letter-spacing:-0.654px;">136</span>
<span class="t" style="left:1552.48px;top:510px;line-height:11px;height:11px;font-size:9.8px;color:#808893;letter-spacing:-0.654px;">140</span>
<span class="t" style="left:288.70px;top:564px;line-height:13px;height:13px;font-size:11.7px;color:#212327;font-weight:700;letter-spacing:-0.342px;">Internet Activity</span>
<div class="a" style="left:1833px;top:563px;width:32px;height:23px;border-radius:11.500px;background:#006fff"></div>
<span class="t" style="left:1843.00px;top:567px;line-height:13px;height:13px;font-size:11.7px;color:#fff;letter-spacing:-0.252px;">All</span>
<span class="t" style="left:1874.50px;top:567px;line-height:13px;height:13px;font-size:11.7px;color:#808893;letter-spacing:-0.576px;">Download</span>
<span class="t" style="left:1942.00px;top:567px;line-height:13px;height:13px;font-size:11.7px;color:#808893;letter-spacing:-0.615px;">Upload</span>
<svg style="left:0;top:0" width="1" height="1"><path d="M2004 568V578.7M2001.2 576.0L2004 578.8L2006.8 576.0" fill="none" stroke="#44c6fd" stroke-width="1.1" stroke-linecap="round" stroke-linejoin="round"/></svg>
<span class="t" style="left:2011.70px;top:566px;line-height:13px;height:13px;font-size:11.7px;color:#44c6fd;letter-spacing:-1.237px;">13.7 GB</span>
<svg style="left:0;top:0" width="1" height="1"><path d="M2063.5 579V568.3M2060.7 571.0L2063.5 568.2L2066.3 571.0" fill="none" stroke="#a451e3" stroke-width="1.1" stroke-linecap="round" stroke-linejoin="round"/></svg>
<span class="t" style="left:2069.70px;top:566px;line-height:13px;height:13px;font-size:11.7px;color:#a451e3;letter-spacing:-0.904px;">1.82 GB</span>
<svg style="left:2114px;top:567px" width="16" height="14" viewBox="0 0 16 14" fill="none" stroke="#6d7079" stroke-width="1"><path d="M2 9.400V3a1 1 0 0 1 1-1h9.400a1 1 0 0 1 1 1v2M.8 11.600h6.800M4.600 9.600v2"/><rect x="9" y="5.800" width="5" height="6.400" rx="1"/><path d="M10.600 7.400h1.800"/></svg>
<span class="t" style="left:2133.50px;top:566px;line-height:13px;height:13px;font-size:11.7px;color:#808893;letter-spacing:-2.513px;">74</span>
<svg style="left:0;top:0" width="2181" height="936" viewBox="0 0 2181 936"><defs><pattern id="stp" x="0" y="899.000" width="20" height="2.8650" patternUnits="userSpaceOnUse"><rect x="0" y="0" width="20" height="1.700" fill="#e8e8ec"/><rect x="0" y="1.700" width="20" height="1.1650" fill="#fcfcfd"/></pattern><linearGradient id="gdl" x1="0" y1="0" x2="0" y2="1"><stop offset="0" stop-color="#44c6fd" stop-opacity=".32"/><stop offset="1" stop-color="#8fd4f5" stop-opacity=".22"/></linearGradient><linearGradient id="gul" x1="0" y1="0" x2="0" y2="1"><stop offset="0" stop-color="#a451e3" stop-opacity=".3"/><stop offset="1" stop-color="#c49bea" stop-opacity=".2"/></linearGradient></defs><path d="M321.30 900.5V724.24H340.23V900.5ZM340.83 900.5V732.83H359.76V900.5ZM360.36 900.5V735.69H379.28V900.5ZM379.88 900.5V732.83H398.81V900.5ZM399.41 900.5V735.69H418.34V900.5ZM418.94 900.5V724.24H437.87V900.5ZM438.47 900.5V741.42H457.40V900.5ZM458.00 900.5V741.42H476.93V900.5ZM477.53 900.5V747.15H496.45V900.5ZM497.05 900.5V735.69H515.98V900.5ZM516.58 900.5V735.69H535.51V900.5ZM536.11 900.5V738.56H555.04V900.5ZM555.64 900.5V729.97H574.57V900.5ZM575.17 900.5V735.69H594.10V900.5ZM594.70 900.5V729.97H613.62V900.5ZM614.22 900.5V747.15H633.15V900.5ZM633.75 900.5V738.56H652.68V900.5ZM653.28 900.5V741.42H672.21V900.5ZM672.81 900.5V732.83H691.74V900.5ZM692.34 900.5V744.29H711.27V900.5ZM711.87 900.5V744.29H730.79V900.5ZM731.39 900.5V738.56H750.32V900.5ZM750.92 900.5V741.42H769.85V900.5ZM770.45 900.5V735.69H789.38V900.5ZM789.98 900.5V741.42H808.91V900.5ZM809.51 900.5V732.83H828.43V900.5ZM829.03 900.5V724.24H847.96V900.5ZM848.56 900.5V729.97H867.49V900.5ZM868.09 900.5V732.83H887.02V900.5ZM887.62 900.5V738.56H906.55V900.5ZM907.15 900.5V732.83H926.08V900.5ZM926.68 900.5V750.02H945.60V900.5ZM946.20 900.5V738.56H965.13V900.5ZM965.73 900.5V750.02H984.66V900.5ZM985.26 900.5V738.56H1004.19V900.5ZM1004.79 900.5V741.42H1023.72V900.5ZM1024.32 900.5V738.56H1043.25V900.5ZM1043.85 900.5V738.56H1062.77V900.5ZM1063.37 900.5V741.42H1082.30V900.5ZM1082.90 900.5V729.97H1101.83V900.5ZM1102.43 900.5V744.29H1121.36V900.5ZM1121.96 900.5V735.69H1140.89V900.5ZM1141.49 900.5V738.56H1160.42V900.5ZM1161.02 900.5V747.15H1179.94V900.5ZM1180.54 900.5V729.97H1199.47V900.5ZM1200.07 900.5V735.69H1219.00V900.5ZM1219.60 900.5V732.83H1238.53V900.5ZM1239.13 900.5V750.02H1258.06V900.5ZM1258.66 900.5V729.97H1277.58V900.5ZM1278.18 900.5V747.15H1297.11V900.5ZM1297.71 900.5V741.42H1316.64V900.5ZM1317.24 900.5V750.02H1336.17V900.5ZM1336.77 900.5V729.97H1355.70V900.5ZM1356.30 900.5V732.83H1375.23V900.5ZM1375.83 900.5V750.02H1394.75V900.5ZM1395.35 900.5V738.56H1414.28V900.5ZM1414.88 900.5V744.29H1433.81V900.5ZM1434.41 900.5V735.69H1453.34V900.5ZM1453.94 900.5V741.42H1472.87V900.5ZM1473.47 900.5V738.56H1492.40V900.5ZM1493.00 900.5V724.24H1511.92V900.5ZM1512.52 900.5V735.69H1531.45V900.5ZM1532.05 900.5V727.10H1550.98V900.5ZM1551.58 900.5V729.97H1570.51V900.5ZM1571.11 900.5V721.37H1590.04V900.5ZM1590.64 900.5V729.97H1609.57V900.5ZM1610.17 900.5V724.24H1629.09V900.5ZM1629.69 900.5V732.83H1648.62V900.5ZM1649.22 900.5V724.24H1668.15V900.5ZM1668.75 900.5V724.24H1687.68V900.5ZM1688.28 900.5V732.83H1707.21V900.5ZM1707.81 900.5V724.24H1726.73V900.5ZM1727.33 900.5V735.69H1746.26V900.5ZM1746.86 900.5V718.50H1765.79V900.5ZM1766.39 900.5V729.97H1785.32V900.5ZM1785.92 900.5V729.97H1804.85V900.5ZM1805.45 900.5V715.64H1824.38V900.5ZM1824.98 900.5V732.83H1843.90V900.5ZM1844.50 900.5V712.77H1863.43V900.5ZM1864.03 900.5V732.83H1882.96V900.5ZM1883.56 900.5V721.37H1902.49V900.5ZM1903.09 900.5V724.24H1922.02V900.5ZM1922.62 900.5V718.50H1941.55V900.5ZM1942.15 900.5V724.24H1961.07V900.5ZM1961.67 900.5V729.97H1980.60V900.5ZM1981.20 900.5V727.10H2000.13V900.5ZM2000.73 900.5V724.24H2019.66V900.5ZM2020.26 900.5V721.37H2039.19V900.5ZM2039.79 900.5V729.97H2058.72V900.5ZM2059.32 900.5V718.50H2078.24V900.5ZM2078.84 900.5V729.97H2097.77V900.5ZM2098.37 900.5V727.10H2117.30V900.5Z" fill="url(#stp)"/><path d="M321.0 614.00H2117.6" stroke="#e4e4ec" stroke-opacity=".75" stroke-width="1"/><path d="M321.0 642.65H2117.6" stroke="#e4e4ec" stroke-opacity=".75" stroke-width="1"/><path d="M321.0 671.30H2117.6" stroke="#e4e4ec" stroke-opacity=".75" stroke-width="1"/><path d="M321.0 699.95H2117.6" stroke="#e4e4ec" stroke-opacity=".75" stroke-width="1"/><path d="M321.0 728.60H2117.6" stroke="#e4e4ec" stroke-opacity=".75" stroke-width="1"/><path d="M321.0 757.25H2117.6" stroke="#e4e4ec" stroke-opacity=".75" stroke-width="1"/><path d="M321.0 785.90H2117.6" stroke="#e4e4ec" stroke-opacity=".75" stroke-width="1"/><path d="M321.0 814.55H2117.6" stroke="#e4e4ec" stroke-opacity=".75" stroke-width="1"/><path d="M321.0 843.20H2117.6" stroke="#e4e4ec" stroke-opacity=".75" stroke-width="1"/><path d="M321.0 871.85H2117.6" stroke="#e4e4ec" stroke-opacity=".75" stroke-width="1"/><path d="M321.0 900.50H2117.6" stroke="#e4e4ec" stroke-opacity=".75" stroke-width="1"/><path d="M321.00 614.0V900.5" stroke="#e4e4ec" stroke-opacity=".75" stroke-width="1"/><path d="M399.11 614.0V900.5" stroke="#e4e4ec" stroke-opacity=".75" stroke-width="1"/><path d="M477.23 614.0V900.5" stroke="#e4e4ec" stroke-opacity=".75" stroke-width="1"/><path d="M555.34 614.0V900.5" stroke="#e4e4ec" stroke-opacity=".75" stroke-width="1"/><path d="M633.45 614.0V900.5" stroke="#e4e4ec" stroke-opacity=".75" stroke-width="1"/><path d="M711.57 614.0V900.5" stroke="#e4e4ec" stroke-opacity=".75" stroke-width="1"/><path d="M789.68 614.0V900.5" stroke="#e4e4ec" stroke-opacity=".75" stroke-width="1"/><path d="M867.79 614.0V900.5" stroke="#e4e4ec" stroke-opacity=".75" stroke-width="1"/><path d="M945.90 614.0V900.5" stroke="#e4e4ec" stroke-opacity=".75" stroke-width="1"/><path d="M1024.02 614.0V900.5" stroke="#e4e4ec" stroke-opacity=".75" stroke-width="1"/><path d="M1102.13 614.0V900.5" stroke="#e4e4ec" stroke-opacity=".75" stroke-width="1"/><path d="M1180.24 614.0V900.5" stroke="#e4e4ec" stroke-opacity=".75" stroke-width="1"/><path d="M1258.36 614.0V900.5" stroke="#e4e4ec" stroke-opacity=".75" stroke-width="1"/><path d="M1336.47 614.0V900.5" stroke="#e4e4ec" stroke-opacity=".75" stroke-width="1"/><path d="M1414.58 614.0V900.5" stroke="#e4e4ec" stroke-opacity=".75" stroke-width="1"/><path d="M1492.70 614.0V900.5" stroke="#e4e4ec" stroke-opacity=".75" stroke-width="1"/><path d="M1570.81 614.0V900.5" stroke="#e4e4ec" stroke-opacity=".75" stroke-width="1"/><path d="M1648.92 614.0V900.5" stroke="#e4e4ec" stroke-opacity=".75" stroke-width="1"/><path d="M1727.03 614.0V900.5" stroke="#e4e4ec" stroke-opacity=".75" stroke-width="1"/><path d="M1805.15 614.0V900.5" stroke="#e4e4ec" stroke-opacity=".75" stroke-width="1"/><path d="M1883.26 614.0V900.5" stroke="#e4e4ec" stroke-opacity=".75" stroke-width="1"/><path d="M1961.37 614.0V900.5" stroke="#e4e4ec" stroke-opacity=".75" stroke-width="1"/><path d="M2039.49 614.0V900.5" stroke="#e4e4ec" stroke-opacity=".75" stroke-width="1"/><path d="M2117.60 614.0V900.5" stroke="#e4e4ec" stroke-opacity=".75" stroke-width="1"/><path d="M320.9 789.5C322.0 792.7 326.0 805.1 327.7 811.0C329.5 816.8 331.7 823.3 332.8 828.6C333.9 833.9 334.6 839.8 335.3 846.3C336.0 852.7 336.6 864.7 337.3 871.5C338.0 878.3 338.9 887.8 339.8 891.7C340.8 895.5 342.2 896.4 343.4 897.2C344.5 898.1 346.4 898.8 347.4 897.2C348.4 895.6 349.1 890.9 349.9 886.6C350.8 882.4 351.9 874.3 353.0 869.0C354.0 863.7 355.7 854.8 356.7 851.3C357.8 847.8 359.1 845.0 360.0 845.8C361.0 846.5 362.1 852.5 363.1 856.4C364.0 860.2 365.1 867.2 366.1 871.5C367.0 875.9 368.3 882.2 369.4 885.4C370.4 888.5 372.0 892.4 373.1 892.4C374.3 892.4 375.9 888.5 376.9 885.4C378.0 882.2 379.3 876.0 380.2 871.5C381.1 867.0 382.4 858.7 383.2 855.1C384.1 851.5 385.0 847.5 385.8 847.5C386.5 847.5 387.5 852.5 388.3 855.1C389.0 857.8 390.2 863.2 390.8 865.2C391.4 867.2 392.0 869.0 392.6 868.5C393.1 867.9 393.8 865.5 394.3 861.4C394.9 857.3 395.6 846.2 396.1 841.2C396.6 836.3 397.3 831.0 397.9 828.6C398.4 826.2 398.9 825.4 399.6 825.3C400.4 825.3 401.9 827.3 402.9 828.1C403.9 828.9 405.0 830.2 406.4 830.6C407.8 831.1 410.9 832.0 412.2 831.1C413.6 830.3 414.6 827.7 415.5 824.8C416.5 822.0 417.7 817.2 418.5 812.2C419.4 807.3 420.4 797.5 421.1 792.1C421.7 786.6 422.5 779.0 423.1 775.7C423.6 772.4 424.3 770.3 424.8 770.1C425.4 769.9 426.2 772.2 426.9 774.4C427.5 776.6 428.3 781.3 429.1 784.5C430.0 787.7 431.2 792.7 432.4 795.8C433.7 799.0 436.1 805.2 437.5 805.4C438.9 805.6 440.5 800.2 441.7 797.1C443.0 794.0 444.7 787.5 445.8 784.5C446.8 781.5 448.0 778.4 448.8 776.9C449.6 775.4 450.4 774.6 451.3 774.4C452.3 774.2 454.0 774.8 455.1 775.7C456.2 776.5 457.9 778.5 458.9 780.2C459.9 781.9 461.1 783.9 461.9 787.0C462.7 790.1 463.8 795.4 464.4 800.9C465.1 806.4 465.9 816.8 466.5 823.6C467.1 830.4 467.8 839.5 468.5 846.3C469.2 853.1 470.2 862.5 471.0 869.0C471.8 875.4 472.8 884.5 473.5 889.2C474.2 893.8 475.0 898.1 475.5 899.7C476.1 900.5 476.7 900.3 477.3 900.4C477.9 900.5 478.9 900.4 479.6 900.4C480.3 900.4 481.4 900.5 482.1 900.4C482.8 899.5 483.5 897.0 484.1 894.2C484.7 891.4 485.4 885.1 486.1 881.6C486.8 878.1 487.7 872.8 488.7 871.0C489.6 869.2 491.0 869.8 492.2 869.7C493.3 869.6 495.1 870.7 496.2 870.2C497.4 869.7 498.8 868.3 499.7 866.5C500.7 864.6 501.7 861.0 502.5 857.6C503.3 854.2 504.3 847.5 505.0 843.8C505.8 840.0 506.7 834.7 507.3 832.4C508.0 830.1 508.7 828.4 509.3 828.6C510.0 828.8 511.0 831.2 511.9 833.7C512.7 836.1 513.9 841.4 514.9 845.0C515.8 848.6 517.3 854.6 518.2 857.6C519.0 860.7 519.9 863.9 520.4 865.2C521.0 866.5 521.5 867.2 521.9 866.5C522.4 865.7 523.0 863.2 523.5 860.2C523.9 857.1 524.5 851.4 525.0 846.3C525.4 841.2 526.0 830.8 526.5 826.1C526.9 821.4 527.5 817.1 528.0 814.8C528.5 812.4 529.2 811.3 530.0 810.2C530.8 809.1 532.4 808.8 533.3 807.2C534.2 805.6 535.1 803.0 535.8 799.6C536.6 796.2 537.7 788.7 538.3 784.5C539.0 780.3 539.9 774.3 540.4 771.9C540.8 769.4 541.2 767.7 541.6 768.1C542.0 768.5 542.7 770.6 543.1 774.4C543.6 778.2 544.2 787.5 544.6 793.3C545.1 799.2 545.7 809.3 546.2 813.5C546.6 817.7 546.9 820.1 547.7 821.6C548.4 823.0 550.0 822.7 550.9 823.1C551.9 823.5 553.5 822.9 554.2 824.3C555.0 825.7 555.4 829.3 556.0 832.4C556.6 835.5 557.4 841.4 558.0 845.0C558.6 848.6 559.3 854.3 559.8 856.4C560.2 858.4 560.6 859.6 561.0 858.9C561.5 858.1 562.2 854.5 562.8 851.3C563.4 848.1 564.1 840.8 564.8 837.5C565.5 834.1 566.7 829.7 567.3 829.1C568.0 828.6 568.7 831.1 569.4 833.7C570.0 836.2 571.0 843.1 571.9 846.3C572.7 849.5 573.9 853.1 574.9 855.1C575.9 857.1 577.6 858.6 578.7 859.4C579.7 860.2 580.8 860.6 582.0 860.4C583.1 860.3 585.1 859.6 586.3 858.4C587.4 857.2 588.7 854.2 589.5 852.6C590.3 851.0 591.0 848.6 591.6 847.5C592.1 846.5 592.6 845.3 593.1 845.5C593.5 845.7 594.0 846.4 594.6 848.8C595.1 851.2 596.0 857.6 596.6 861.4C597.2 865.2 598.0 871.2 598.9 874.0C599.7 876.9 601.1 879.0 602.1 880.3C603.2 881.7 605.1 883.2 605.9 882.8C606.8 882.5 607.2 880.6 607.7 877.8C608.2 875.0 608.9 867.9 609.5 863.9C610.0 860.0 610.7 854.0 611.2 851.3C611.7 848.7 612.3 846.1 612.7 846.3C613.2 846.5 613.7 848.8 614.2 852.6C614.8 856.4 615.7 866.6 616.3 871.5C616.9 876.4 617.8 882.9 618.3 885.4C618.8 887.8 619.2 888.5 619.5 887.9C619.9 887.3 620.4 885.6 620.8 881.6C621.3 877.6 622.0 866.5 622.6 861.4C623.1 856.3 623.8 850.4 624.3 847.5C624.8 844.7 625.4 842.5 625.9 842.5C626.3 842.5 626.8 844.9 627.4 847.5C627.9 850.2 628.8 856.7 629.4 860.2C629.9 863.6 630.6 868.3 631.1 870.2C631.7 872.1 632.3 872.9 632.9 872.8C633.6 872.6 634.5 871.4 635.4 869.5C636.4 867.6 638.2 862.9 639.2 860.2C640.3 857.4 641.6 853.4 642.5 851.3C643.4 849.2 644.8 846.3 645.5 846.3C646.2 846.3 646.7 848.3 647.3 851.3C647.9 854.4 648.6 861.5 649.3 866.5C650.0 871.4 651.1 879.8 651.8 884.1C652.6 888.5 653.6 893.0 654.4 895.5C655.1 897.9 655.9 899.7 656.9 900.4C657.8 900.5 659.0 900.4 660.7 900.4C662.3 900.4 665.1 900.3 668.0 900.3C670.9 900.3 677.5 900.5 680.0 900.2C682.5 899.9 683.1 898.6 684.6 898.6C686.1 898.6 682.4 899.9 690.0 900.2C697.6 900.5 727.2 900.5 735.0 900.3C742.8 900.1 740.1 899.5 742.0 899.0C743.9 898.5 746.1 897.1 747.7 897.2C749.4 897.3 751.2 898.9 753.0 899.4C754.8 899.9 720.1 900.1 760.0 900.3C799.9 900.4 978.2 900.5 1019.3 900.4C1060.4 900.3 1030.0 899.5 1033.9 899.4C1037.8 899.3 1042.6 900.2 1045.0 900.0C1047.4 899.8 1048.6 898.5 1050.0 897.8C1051.4 897.1 1052.8 895.5 1054.1 895.4C1055.4 895.3 1057.7 896.9 1059.0 897.4C1060.3 897.9 1061.8 898.6 1063.0 899.0C1064.2 899.4 1066.1 900.5 1066.9 900.1C1067.7 899.2 1068.0 896.5 1068.6 893.0C1069.2 889.5 1069.9 881.5 1070.6 877.0C1071.3 872.5 1072.6 866.1 1073.4 863.3C1074.2 860.4 1075.2 859.2 1076.0 858.0C1076.8 856.8 1077.9 856.1 1078.9 855.6C1079.9 855.1 1081.4 855.1 1082.5 855.0C1083.6 854.9 1085.3 854.8 1086.2 855.0C1087.1 855.2 1087.8 855.6 1088.4 856.2C1089.0 856.8 1089.4 857.5 1089.9 858.7C1090.4 859.9 1091.3 862.1 1091.8 864.0C1092.3 865.9 1092.8 867.9 1093.5 871.5C1094.2 875.1 1095.7 884.3 1096.3 888.0C1096.9 891.7 1097.3 894.1 1097.8 896.0C1098.3 897.9 1097.4 899.7 1099.4 900.4C1101.4 900.5 1108.7 900.5 1111.0 900.4C1113.3 900.2 1113.9 899.7 1115.0 899.4C1116.1 899.1 1117.2 898.3 1118.3 898.3C1119.3 898.3 1120.8 899.3 1122.0 899.6C1123.2 899.9 1112.0 900.3 1126.0 900.4C1140.0 900.5 1200.6 900.5 1215.0 900.3C1229.4 900.1 1219.9 899.7 1222.0 899.3C1224.1 898.9 1227.2 898.2 1229.3 897.8C1231.4 897.3 1234.2 897.0 1235.7 896.3C1237.2 895.6 1238.0 894.4 1239.0 893.4C1240.0 892.4 1241.3 889.3 1242.1 889.3C1242.9 889.3 1243.7 891.9 1244.4 893.4C1245.1 894.9 1246.0 898.0 1246.7 899.0C1247.5 900.0 1248.6 900.3 1249.4 900.2C1250.2 900.1 1251.2 899.1 1252.0 898.6C1252.8 898.1 1254.0 897.1 1254.9 897.2C1255.8 897.3 1257.1 898.5 1258.0 899.0C1258.9 899.5 1253.5 900.2 1261.0 900.4C1268.5 900.5 1300.3 900.5 1308.0 900.2C1315.7 899.9 1310.9 899.3 1312.0 898.6C1313.1 897.9 1314.3 896.5 1315.5 895.4C1316.7 894.3 1318.8 891.8 1320.0 891.3C1321.2 890.8 1322.4 891.6 1323.4 891.9C1324.4 892.2 1325.6 892.7 1326.5 893.5C1327.4 894.3 1328.6 896.0 1329.4 897.0C1330.2 898.0 1330.4 899.5 1332.0 900.0C1333.6 900.5 1338.8 900.5 1340.2 900.2C1341.6 899.5 1341.2 897.1 1341.6 895.0C1342.0 892.9 1342.4 889.1 1343.0 886.2C1343.6 883.3 1344.9 875.7 1345.7 875.7C1346.5 875.7 1347.8 883.3 1348.5 886.2C1349.2 889.1 1349.7 892.9 1350.2 895.0C1350.7 897.1 1347.3 899.4 1351.8 900.2C1356.3 900.5 1374.0 900.4 1380.0 900.4C1386.0 900.4 1389.7 900.5 1392.0 900.4C1394.3 900.3 1394.6 900.5 1395.6 899.5C1396.6 897.3 1397.6 893.1 1398.5 885.9C1399.4 878.7 1400.4 859.6 1401.3 851.8C1402.2 844.0 1403.5 834.2 1404.4 834.2C1405.3 834.2 1406.2 844.0 1407.0 851.8C1407.8 859.6 1409.0 879.3 1409.8 885.9C1410.6 892.5 1411.2 896.8 1412.1 895.9C1413.0 895.0 1414.6 890.2 1415.5 880.2C1416.4 870.2 1417.5 850.0 1418.4 829.1C1419.3 808.2 1420.4 762.4 1421.2 741.0C1422.0 719.6 1422.9 686.2 1423.5 686.2C1424.1 686.2 1424.9 717.9 1425.5 741.0C1426.1 764.1 1427.1 817.1 1427.7 840.5C1428.3 863.9 1429.0 891.3 1429.7 897.3C1430.4 900.5 1431.7 886.6 1432.6 880.2C1433.5 873.8 1434.7 859.2 1435.4 854.7C1436.1 850.2 1436.5 849.1 1437.1 850.4C1437.7 851.7 1438.7 857.4 1439.7 863.2C1440.7 869.0 1442.6 883.4 1443.9 888.8C1445.2 894.2 1445.6 897.9 1448.2 899.5C1450.8 900.5 1458.5 900.3 1461.0 899.5C1463.5 898.7 1464.0 896.4 1465.2 894.4C1466.4 892.4 1467.8 886.5 1468.9 886.5C1470.0 886.5 1471.4 892.5 1472.3 894.4C1473.2 896.3 1474.1 898.6 1475.2 899.0C1476.3 899.4 1478.1 899.3 1479.4 897.3C1480.7 895.3 1482.3 889.0 1483.7 885.9C1485.1 882.8 1487.2 876.5 1488.5 876.5C1489.8 876.5 1490.8 883.2 1492.2 885.9C1493.6 888.6 1496.2 892.6 1497.9 894.4C1499.6 896.2 1501.9 897.6 1503.6 897.8C1505.3 898.0 1507.7 896.8 1509.3 895.9C1510.9 895.0 1512.7 891.8 1514.4 891.6C1516.1 891.4 1518.6 894.0 1520.6 894.4C1522.6 894.8 1525.8 896.3 1527.7 894.4C1529.6 892.5 1531.6 884.9 1533.4 881.6C1535.2 878.3 1538.2 872.6 1539.9 872.6C1541.6 872.6 1543.7 880.0 1544.8 881.6C1545.9 883.2 1546.1 885.5 1547.0 883.6C1547.9 881.7 1549.5 872.7 1550.5 868.9C1551.5 865.1 1552.5 858.1 1553.6 858.1C1554.7 858.1 1556.4 864.9 1557.6 868.9C1558.8 872.9 1560.5 880.8 1561.8 884.5C1563.1 888.2 1565.0 895.9 1566.1 893.6C1567.2 891.3 1568.1 879.4 1568.9 868.9C1569.7 858.4 1570.5 831.7 1571.2 823.4C1571.9 815.1 1572.6 814.1 1573.5 813.5C1574.4 812.9 1576.4 816.3 1577.4 819.1C1578.4 821.9 1579.5 825.3 1580.3 831.9C1581.1 838.5 1581.9 854.2 1582.6 863.2C1583.3 872.2 1584.3 887.1 1585.1 891.6C1585.9 896.1 1586.9 893.5 1588.0 893.0C1589.1 892.5 1591.1 888.2 1592.5 888.2C1593.9 888.2 1596.1 892.9 1597.3 893.0C1598.5 893.1 1599.0 891.8 1600.2 888.8C1601.4 885.8 1603.9 874.0 1605.3 873.1C1606.7 872.2 1608.1 880.3 1609.5 883.1C1610.9 885.9 1612.8 890.0 1614.4 891.6C1616.0 893.2 1618.4 893.7 1620.0 893.6C1621.6 893.5 1623.2 890.7 1624.9 890.7C1626.6 890.7 1628.9 893.8 1631.4 893.6C1633.9 893.4 1638.6 890.2 1641.4 889.3C1644.2 888.4 1647.6 886.7 1649.9 887.3C1652.2 887.9 1654.9 891.9 1657.0 893.0C1659.1 894.1 1662.0 895.0 1664.1 894.4C1666.2 893.8 1669.4 890.4 1671.2 889.3C1673.0 888.2 1674.8 886.2 1676.3 886.8C1677.8 887.4 1679.1 892.0 1681.1 893.0C1683.1 894.0 1687.6 895.1 1689.7 893.6C1691.8 892.1 1693.4 886.0 1695.3 883.1C1697.2 880.2 1700.7 873.6 1702.4 874.0C1704.1 874.4 1705.7 883.4 1706.7 885.9C1707.7 888.4 1708.1 892.3 1709.0 891.0C1709.9 889.7 1711.3 880.5 1712.4 877.4C1713.5 874.3 1714.8 869.9 1716.1 870.3C1717.4 870.7 1719.1 877.9 1720.9 880.2C1722.7 882.5 1725.9 884.0 1728.0 885.9C1730.1 887.8 1733.2 892.6 1735.1 893.0C1737.0 893.4 1738.9 888.6 1740.8 888.8C1742.7 889.0 1745.4 894.1 1747.9 894.4C1750.5 894.7 1755.7 891.4 1757.8 891.0C1759.9 890.6 1760.6 891.5 1762.0 892.0C1763.4 892.5 1766.0 895.4 1767.3 894.5C1768.6 893.6 1770.0 888.4 1771.0 886.2C1772.0 884.0 1773.3 879.5 1774.3 879.8C1775.3 880.1 1776.4 885.8 1777.4 888.0C1778.4 890.2 1779.9 894.0 1781.1 894.8C1782.3 895.6 1784.3 894.9 1785.7 893.5C1787.1 892.1 1789.1 886.9 1790.3 885.3C1791.5 883.6 1792.4 882.4 1793.4 882.5C1794.4 882.6 1795.7 885.0 1796.7 886.2C1797.7 887.4 1798.8 890.3 1800.3 890.2C1801.8 890.1 1804.9 886.0 1806.8 885.8C1808.7 885.6 1811.1 887.9 1813.2 888.9C1815.3 889.9 1818.6 892.0 1820.5 892.3C1822.4 892.6 1824.2 892.0 1826.0 891.2C1827.8 890.4 1830.5 887.0 1832.4 886.9C1834.3 886.8 1836.3 889.9 1838.9 890.2C1841.5 890.5 1846.9 888.7 1849.9 888.6C1852.9 888.5 1856.0 889.5 1859.0 889.3C1862.0 889.1 1867.7 887.1 1870.0 887.5C1872.3 887.9 1873.4 890.7 1874.6 891.7C1875.8 892.8 1876.8 895.3 1878.3 894.5C1879.8 893.7 1882.8 886.6 1884.3 886.2C1885.8 885.8 1887.5 890.5 1888.4 891.7C1889.3 892.9 1889.8 895.8 1890.6 894.1C1891.4 892.5 1892.9 884.1 1893.9 880.7C1895.0 877.3 1896.5 871.6 1897.6 871.5C1898.7 871.4 1900.2 877.8 1901.2 879.8C1902.2 881.8 1903.1 883.8 1904.3 884.9C1905.5 886.0 1907.8 885.9 1909.5 887.1C1911.2 888.3 1913.8 892.1 1915.9 893.0C1918.0 893.9 1921.1 893.8 1923.2 893.2C1925.3 892.6 1927.7 889.6 1929.6 889.3C1931.5 889.0 1934.2 892.3 1936.1 891.2C1938.0 890.1 1940.6 882.0 1942.5 882.2C1944.4 882.4 1946.8 890.8 1948.9 892.6C1951.0 894.4 1954.3 895.3 1956.2 894.1C1958.1 892.9 1959.9 884.9 1961.7 884.4C1963.5 883.9 1966.3 890.0 1968.2 890.8C1970.1 891.6 1972.6 891.0 1974.6 889.9C1976.6 888.8 1979.5 882.8 1981.4 883.3C1983.3 883.8 1985.3 891.8 1987.4 893.5C1989.5 895.2 1992.8 895.4 1995.7 894.8C1998.6 894.2 2004.0 889.6 2006.7 889.5C2009.4 889.4 2011.9 893.8 2014.0 893.9C2016.1 894.0 2018.6 890.0 2020.4 889.9C2022.2 889.8 2022.9 892.5 2025.9 893.2C2028.9 893.9 2037.3 894.5 2040.6 894.5C2043.9 894.5 2046.0 894.5 2047.9 893.5C2049.8 892.5 2051.8 889.5 2053.4 888.0C2055.1 886.5 2057.1 883.9 2058.9 883.6C2060.7 883.3 2063.5 885.1 2065.4 886.2C2067.3 887.3 2070.0 890.4 2071.8 890.8C2073.6 891.2 2075.9 891.0 2077.3 888.9C2078.7 886.8 2079.8 881.0 2081.0 877.0C2082.2 873.0 2084.1 862.0 2085.2 862.0C2086.3 862.0 2087.4 872.3 2088.3 877.0C2089.2 881.7 2090.2 890.9 2091.0 893.5C2091.8 896.1 2092.6 896.1 2093.8 894.5C2095.0 892.9 2097.7 885.7 2099.3 882.5C2101.0 879.3 2103.3 873.7 2104.8 873.4C2106.3 873.1 2108.0 877.7 2109.4 880.7C2110.8 883.7 2112.8 890.5 2114.0 893.5C2115.2 896.5 2117.1 899.4 2117.6 900.4L2117.6 900.5L321.0 900.5Z" fill="url(#gdl)"/><path d="M320.9 789.5C322.0 792.7 326.0 805.1 327.7 811.0C329.5 816.8 331.7 823.3 332.8 828.6C333.9 833.9 334.6 839.8 335.3 846.3C336.0 852.7 336.6 864.7 337.3 871.5C338.0 878.3 338.9 887.8 339.8 891.7C340.8 895.5 342.2 896.4 343.4 897.2C344.5 898.1 346.4 898.8 347.4 897.2C348.4 895.6 349.1 890.9 349.9 886.6C350.8 882.4 351.9 874.3 353.0 869.0C354.0 863.7 355.7 854.8 356.7 851.3C357.8 847.8 359.1 845.0 360.0 845.8C361.0 846.5 362.1 852.5 363.1 856.4C364.0 860.2 365.1 867.2 366.1 871.5C367.0 875.9 368.3 882.2 369.4 885.4C370.4 888.5 372.0 892.4 373.1 892.4C374.3 892.4 375.9 888.5 376.9 885.4C378.0 882.2 379.3 876.0 380.2 871.5C381.1 867.0 382.4 858.7 383.2 855.1C384.1 851.5 385.0 847.5 385.8 847.5C386.5 847.5 387.5 852.5 388.3 855.1C389.0 857.8 390.2 863.2 390.8 865.2C391.4 867.2 392.0 869.0 392.6 868.5C393.1 867.9 393.8 865.5 394.3 861.4C394.9 857.3 395.6 846.2 396.1 841.2C396.6 836.3 397.3 831.0 397.9 828.6C398.4 826.2 398.9 825.4 399.6 825.3C400.4 825.3 401.9 827.3 402.9 828.1C403.9 828.9 405.0 830.2 406.4 830.6C407.8 831.1 410.9 832.0 412.2 831.1C413.6 830.3 414.6 827.7 415.5 824.8C416.5 822.0 417.7 817.2 418.5 812.2C419.4 807.3 420.4 797.5 421.1 792.1C421.7 786.6 422.5 779.0 423.1 775.7C423.6 772.4 424.3 770.3 424.8 770.1C425.4 769.9 426.2 772.2 426.9 774.4C427.5 776.6 428.3 781.3 429.1 784.5C430.0 787.7 431.2 792.7 432.4 795.8C433.7 799.0 436.1 805.2 437.5 805.4C438.9 805.6 440.5 800.2 441.7 797.1C443.0 794.0 444.7 787.5 445.8 784.5C446.8 781.5 448.0 778.4 448.8 776.9C449.6 775.4 450.4 774.6 451.3 774.4C452.3 774.2 454.0 774.8 455.1 775.7C456.2 776.5 457.9 778.5 458.9 780.2C459.9 781.9 461.1 783.9 461.9 787.0C462.7 790.1 463.8 795.4 464.4 800.9C465.1 806.4 465.9 816.8 466.5 823.6C467.1 830.4 467.8 839.5 468.5 846.3C469.2 853.1 470.2 862.5 471.0 869.0C471.8 875.4 472.8 884.5 473.5 889.2C474.2 893.8 475.0 898.1 475.5 899.7C476.1 900.5 476.7 900.3 477.3 900.4C477.9 900.5 478.9 900.4 479.6 900.4C480.3 900.4 481.4 900.5 482.1 900.4C482.8 899.5 483.5 897.0 484.1 894.2C484.7 891.4 485.4 885.1 486.1 881.6C486.8 878.1 487.7 872.8 488.7 871.0C489.6 869.2 491.0 869.8 492.2 869.7C493.3 869.6 495.1 870.7 496.2 870.2C497.4 869.7 498.8 868.3 499.7 866.5C500.7 864.6 501.7 861.0 502.5 857.6C503.3 854.2 504.3 847.5 505.0 843.8C505.8 840.0 506.7 834.7 507.3 832.4C508.0 830.1 508.7 828.4 509.3 828.6C510.0 828.8 511.0 831.2 511.9 833.7C512.7 836.1 513.9 841.4 514.9 845.0C515.8 848.6 517.3 854.6 518.2 857.6C519.0 860.7 519.9 863.9 520.4 865.2C521.0 866.5 521.5 867.2 521.9 866.5C522.4 865.7 523.0 863.2 523.5 860.2C523.9 857.1 524.5 851.4 525.0 846.3C525.4 841.2 526.0 830.8 526.5 826.1C526.9 821.4 527.5 817.1 528.0 814.8C528.5 812.4 529.2 811.3 530.0 810.2C530.8 809.1 532.4 808.8 533.3 807.2C534.2 805.6 535.1 803.0 535.8 799.6C536.6 796.2 537.7 788.7 538.3 784.5C539.0 780.3 539.9 774.3 540.4 771.9C540.8 769.4 541.2 767.7 541.6 768.1C542.0 768.5 542.7 770.6 543.1 774.4C543.6 778.2 544.2 787.5 544.6 793.3C545.1 799.2 545.7 809.3 546.2 813.5C546.6 817.7 546.9 820.1 547.7 821.6C548.4 823.0 550.0 822.7 550.9 823.1C551.9 823.5 553.5 822.9 554.2 824.3C555.0 825.7 555.4 829.3 556.0 832.4C556.6 835.5 557.4 841.4 558.0 845.0C558.6 848.6 559.3 854.3 559.8 856.4C560.2 858.4 560.6 859.6 561.0 858.9C561.5 858.1 562.2 854.5 562.8 851.3C563.4 848.1 564.1 840.8 564.8 837.5C565.5 834.1 566.7 829.7 567.3 829.1C568.0 828.6 568.7 831.1 569.4 833.7C570.0 836.2 571.0 843.1 571.9 846.3C572.7 849.5 573.9 853.1 574.9 855.1C575.9 857.1 577.6 858.6 578.7 859.4C579.7 860.2 580.8 860.6 582.0 860.4C583.1 860.3 585.1 859.6 586.3 858.4C587.4 857.2 588.7 854.2 589.5 852.6C590.3 851.0 591.0 848.6 591.6 847.5C592.1 846.5 592.6 845.3 593.1 845.5C593.5 845.7 594.0 846.4 594.6 848.8C595.1 851.2 596.0 857.6 596.6 861.4C597.2 865.2 598.0 871.2 598.9 874.0C599.7 876.9 601.1 879.0 602.1 880.3C603.2 881.7 605.1 883.2 605.9 882.8C606.8 882.5 607.2 880.6 607.7 877.8C608.2 875.0 608.9 867.9 609.5 863.9C610.0 860.0 610.7 854.0 611.2 851.3C611.7 848.7 612.3 846.1 612.7 846.3C613.2 846.5 613.7 848.8 614.2 852.6C614.8 856.4 615.7 866.6 616.3 871.5C616.9 876.4 617.8 882.9 618.3 885.4C618.8 887.8 619.2 888.5 619.5 887.9C619.9 887.3 620.4 885.6 620.8 881.6C621.3 877.6 622.0 866.5 622.6 861.4C623.1 856.3 623.8 850.4 624.3 847.5C624.8 844.7 625.4 842.5 625.9 842.5C626.3 842.5 626.8 844.9 627.4 847.5C627.9 850.2 628.8 856.7 629.4 860.2C629.9 863.6 630.6 868.3 631.1 870.2C631.7 872.1 632.3 872.9 632.9 872.8C633.6 872.6 634.5 871.4 635.4 869.5C636.4 867.6 638.2 862.9 639.2 860.2C640.3 857.4 641.6 853.4 642.5 851.3C643.4 849.2 644.8 846.3 645.5 846.3C646.2 846.3 646.7 848.3 647.3 851.3C647.9 854.4 648.6 861.5 649.3 866.5C650.0 871.4 651.1 879.8 651.8 884.1C652.6 888.5 653.6 893.0 654.4 895.5C655.1 897.9 655.9 899.7 656.9 900.4C657.8 900.5 659.0 900.4 660.7 900.4C662.3 900.4 665.1 900.3 668.0 900.3C670.9 900.3 677.5 900.5 680.0 900.2C682.5 899.9 683.1 898.6 684.6 898.6C686.1 898.6 682.4 899.9 690.0 900.2C697.6 900.5 727.2 900.5 735.0 900.3C742.8 900.1 740.1 899.5 742.0 899.0C743.9 898.5 746.1 897.1 747.7 897.2C749.4 897.3 751.2 898.9 753.0 899.4C754.8 899.9 720.1 900.1 760.0 900.3C799.9 900.4 978.2 900.5 1019.3 900.4C1060.4 900.3 1030.0 899.5 1033.9 899.4C1037.8 899.3 1042.6 900.2 1045.0 900.0C1047.4 899.8 1048.6 898.5 1050.0 897.8C1051.4 897.1 1052.8 895.5 1054.1 895.4C1055.4 895.3 1057.7 896.9 1059.0 897.4C1060.3 897.9 1061.8 898.6 1063.0 899.0C1064.2 899.4 1066.1 900.5 1066.9 900.1C1067.7 899.2 1068.0 896.5 1068.6 893.0C1069.2 889.5 1069.9 881.5 1070.6 877.0C1071.3 872.5 1072.6 866.1 1073.4 863.3C1074.2 860.4 1075.2 859.2 1076.0 858.0C1076.8 856.8 1077.9 856.1 1078.9 855.6C1079.9 855.1 1081.4 855.1 1082.5 855.0C1083.6 854.9 1085.3 854.8 1086.2 855.0C1087.1 855.2 1087.8 855.6 1088.4 856.2C1089.0 856.8 1089.4 857.5 1089.9 858.7C1090.4 859.9 1091.3 862.1 1091.8 864.0C1092.3 865.9 1092.8 867.9 1093.5 871.5C1094.2 875.1 1095.7 884.3 1096.3 888.0C1096.9 891.7 1097.3 894.1 1097.8 896.0C1098.3 897.9 1097.4 899.7 1099.4 900.4C1101.4 900.5 1108.7 900.5 1111.0 900.4C1113.3 900.2 1113.9 899.7 1115.0 899.4C1116.1 899.1 1117.2 898.3 1118.3 898.3C1119.3 898.3 1120.8 899.3 1122.0 899.6C1123.2 899.9 1112.0 900.3 1126.0 900.4C1140.0 900.5 1200.6 900.5 1215.0 900.3C1229.4 900.1 1219.9 899.7 1222.0 899.3C1224.1 898.9 1227.2 898.2 1229.3 897.8C1231.4 897.3 1234.2 897.0 1235.7 896.3C1237.2 895.6 1238.0 894.4 1239.0 893.4C1240.0 892.4 1241.3 889.3 1242.1 889.3C1242.9 889.3 1243.7 891.9 1244.4 893.4C1245.1 894.9 1246.0 898.0 1246.7 899.0C1247.5 900.0 1248.6 900.3 1249.4 900.2C1250.2 900.1 1251.2 899.1 1252.0 898.6C1252.8 898.1 1254.0 897.1 1254.9 897.2C1255.8 897.3 1257.1 898.5 1258.0 899.0C1258.9 899.5 1253.5 900.2 1261.0 900.4C1268.5 900.5 1300.3 900.5 1308.0 900.2C1315.7 899.9 1310.9 899.3 1312.0 898.6C1313.1 897.9 1314.3 896.5 1315.5 895.4C1316.7 894.3 1318.8 891.8 1320.0 891.3C1321.2 890.8 1322.4 891.6 1323.4 891.9C1324.4 892.2 1325.6 892.7 1326.5 893.5C1327.4 894.3 1328.6 896.0 1329.4 897.0C1330.2 898.0 1330.4 899.5 1332.0 900.0C1333.6 900.5 1338.8 900.5 1340.2 900.2C1341.6 899.5 1341.2 897.1 1341.6 895.0C1342.0 892.9 1342.4 889.1 1343.0 886.2C1343.6 883.3 1344.9 875.7 1345.7 875.7C1346.5 875.7 1347.8 883.3 1348.5 886.2C1349.2 889.1 1349.7 892.9 1350.2 895.0C1350.7 897.1 1347.3 899.4 1351.8 900.2C1356.3 900.5 1374.0 900.4 1380.0 900.4C1386.0 900.4 1389.7 900.5 1392.0 900.4C1394.3 900.3 1394.6 900.5 1395.6 899.5C1396.6 897.3 1397.6 893.1 1398.5 885.9C1399.4 878.7 1400.4 859.6 1401.3 851.8C1402.2 844.0 1403.5 834.2 1404.4 834.2C1405.3 834.2 1406.2 844.0 1407.0 851.8C1407.8 859.6 1409.0 879.3 1409.8 885.9C1410.6 892.5 1411.2 896.8 1412.1 895.9C1413.0 895.0 1414.6 890.2 1415.5 880.2C1416.4 870.2 1417.5 850.0 1418.4 829.1C1419.3 808.2 1420.4 762.4 1421.2 741.0C1422.0 719.6 1422.9 686.2 1423.5 686.2C1424.1 686.2 1424.9 717.9 1425.5 741.0C1426.1 764.1 1427.1 817.1 1427.7 840.5C1428.3 863.9 1429.0 891.3 1429.7 897.3C1430.4 900.5 1431.7 886.6 1432.6 880.2C1433.5 873.8 1434.7 859.2 1435.4 854.7C1436.1 850.2 1436.5 849.1 1437.1 850.4C1437.7 851.7 1438.7 857.4 1439.7 863.2C1440.7 869.0 1442.6 883.4 1443.9 888.8C1445.2 894.2 1445.6 897.9 1448.2 899.5C1450.8 900.5 1458.5 900.3 1461.0 899.5C1463.5 898.7 1464.0 896.4 1465.2 894.4C1466.4 892.4 1467.8 886.5 1468.9 886.5C1470.0 886.5 1471.4 892.5 1472.3 894.4C1473.2 896.3 1474.1 898.6 1475.2 899.0C1476.3 899.4 1478.1 899.3 1479.4 897.3C1480.7 895.3 1482.3 889.0 1483.7 885.9C1485.1 882.8 1487.2 876.5 1488.5 876.5C1489.8 876.5 1490.8 883.2 1492.2 885.9C1493.6 888.6 1496.2 892.6 1497.9 894.4C1499.6 896.2 1501.9 897.6 1503.6 897.8C1505.3 898.0 1507.7 896.8 1509.3 895.9C1510.9 895.0 1512.7 891.8 1514.4 891.6C1516.1 891.4 1518.6 894.0 1520.6 894.4C1522.6 894.8 1525.8 896.3 1527.7 894.4C1529.6 892.5 1531.6 884.9 1533.4 881.6C1535.2 878.3 1538.2 872.6 1539.9 872.6C1541.6 872.6 1543.7 880.0 1544.8 881.6C1545.9 883.2 1546.1 885.5 1547.0 883.6C1547.9 881.7 1549.5 872.7 1550.5 868.9C1551.5 865.1 1552.5 858.1 1553.6 858.1C1554.7 858.1 1556.4 864.9 1557.6 868.9C1558.8 872.9 1560.5 880.8 1561.8 884.5C1563.1 888.2 1565.0 895.9 1566.1 893.6C1567.2 891.3 1568.1 879.4 1568.9 868.9C1569.7 858.4 1570.5 831.7 1571.2 823.4C1571.9 815.1 1572.6 814.1 1573.5 813.5C1574.4 812.9 1576.4 816.3 1577.4 819.1C1578.4 821.9 1579.5 825.3 1580.3 831.9C1581.1 838.5 1581.9 854.2 1582.6 863.2C1583.3 872.2 1584.3 887.1 1585.1 891.6C1585.9 896.1 1586.9 893.5 1588.0 893.0C1589.1 892.5 1591.1 888.2 1592.5 888.2C1593.9 888.2 1596.1 892.9 1597.3 893.0C1598.5 893.1 1599.0 891.8 1600.2 888.8C1601.4 885.8 1603.9 874.0 1605.3 873.1C1606.7 872.2 1608.1 880.3 1609.5 883.1C1610.9 885.9 1612.8 890.0 1614.4 891.6C1616.0 893.2 1618.4 893.7 1620.0 893.6C1621.6 893.5 1623.2 890.7 1624.9 890.7C1626.6 890.7 1628.9 893.8 1631.4 893.6C1633.9 893.4 1638.6 890.2 1641.4 889.3C1644.2 888.4 1647.6 886.7 1649.9 887.3C1652.2 887.9 1654.9 891.9 1657.0 893.0C1659.1 894.1 1662.0 895.0 1664.1 894.4C1666.2 893.8 1669.4 890.4 1671.2 889.3C1673.0 888.2 1674.8 886.2 1676.3 886.8C1677.8 887.4 1679.1 892.0 1681.1 893.0C1683.1 894.0 1687.6 895.1 1689.7 893.6C1691.8 892.1 1693.4 886.0 1695.3 883.1C1697.2 880.2 1700.7 873.6 1702.4 874.0C1704.1 874.4 1705.7 883.4 1706.7 885.9C1707.7 888.4 1708.1 892.3 1709.0 891.0C1709.9 889.7 1711.3 880.5 1712.4 877.4C1713.5 874.3 1714.8 869.9 1716.1 870.3C1717.4 870.7 1719.1 877.9 1720.9 880.2C1722.7 882.5 1725.9 884.0 1728.0 885.9C1730.1 887.8 1733.2 892.6 1735.1 893.0C1737.0 893.4 1738.9 888.6 1740.8 888.8C1742.7 889.0 1745.4 894.1 1747.9 894.4C1750.5 894.7 1755.7 891.4 1757.8 891.0C1759.9 890.6 1760.6 891.5 1762.0 892.0C1763.4 892.5 1766.0 895.4 1767.3 894.5C1768.6 893.6 1770.0 888.4 1771.0 886.2C1772.0 884.0 1773.3 879.5 1774.3 879.8C1775.3 880.1 1776.4 885.8 1777.4 888.0C1778.4 890.2 1779.9 894.0 1781.1 894.8C1782.3 895.6 1784.3 894.9 1785.7 893.5C1787.1 892.1 1789.1 886.9 1790.3 885.3C1791.5 883.6 1792.4 882.4 1793.4 882.5C1794.4 882.6 1795.7 885.0 1796.7 886.2C1797.7 887.4 1798.8 890.3 1800.3 890.2C1801.8 890.1 1804.9 886.0 1806.8 885.8C1808.7 885.6 1811.1 887.9 1813.2 888.9C1815.3 889.9 1818.6 892.0 1820.5 892.3C1822.4 892.6 1824.2 892.0 1826.0 891.2C1827.8 890.4 1830.5 887.0 1832.4 886.9C1834.3 886.8 1836.3 889.9 1838.9 890.2C1841.5 890.5 1846.9 888.7 1849.9 888.6C1852.9 888.5 1856.0 889.5 1859.0 889.3C1862.0 889.1 1867.7 887.1 1870.0 887.5C1872.3 887.9 1873.4 890.7 1874.6 891.7C1875.8 892.8 1876.8 895.3 1878.3 894.5C1879.8 893.7 1882.8 886.6 1884.3 886.2C1885.8 885.8 1887.5 890.5 1888.4 891.7C1889.3 892.9 1889.8 895.8 1890.6 894.1C1891.4 892.5 1892.9 884.1 1893.9 880.7C1895.0 877.3 1896.5 871.6 1897.6 871.5C1898.7 871.4 1900.2 877.8 1901.2 879.8C1902.2 881.8 1903.1 883.8 1904.3 884.9C1905.5 886.0 1907.8 885.9 1909.5 887.1C1911.2 888.3 1913.8 892.1 1915.9 893.0C1918.0 893.9 1921.1 893.8 1923.2 893.2C1925.3 892.6 1927.7 889.6 1929.6 889.3C1931.5 889.0 1934.2 892.3 1936.1 891.2C1938.0 890.1 1940.6 882.0 1942.5 882.2C1944.4 882.4 1946.8 890.8 1948.9 892.6C1951.0 894.4 1954.3 895.3 1956.2 894.1C1958.1 892.9 1959.9 884.9 1961.7 884.4C1963.5 883.9 1966.3 890.0 1968.2 890.8C1970.1 891.6 1972.6 891.0 1974.6 889.9C1976.6 888.8 1979.5 882.8 1981.4 883.3C1983.3 883.8 1985.3 891.8 1987.4 893.5C1989.5 895.2 1992.8 895.4 1995.7 894.8C1998.6 894.2 2004.0 889.6 2006.7 889.5C2009.4 889.4 2011.9 893.8 2014.0 893.9C2016.1 894.0 2018.6 890.0 2020.4 889.9C2022.2 889.8 2022.9 892.5 2025.9 893.2C2028.9 893.9 2037.3 894.5 2040.6 894.5C2043.9 894.5 2046.0 894.5 2047.9 893.5C2049.8 892.5 2051.8 889.5 2053.4 888.0C2055.1 886.5 2057.1 883.9 2058.9 883.6C2060.7 883.3 2063.5 885.1 2065.4 886.2C2067.3 887.3 2070.0 890.4 2071.8 890.8C2073.6 891.2 2075.9 891.0 2077.3 888.9C2078.7 886.8 2079.8 881.0 2081.0 877.0C2082.2 873.0 2084.1 862.0 2085.2 862.0C2086.3 862.0 2087.4 872.3 2088.3 877.0C2089.2 881.7 2090.2 890.9 2091.0 893.5C2091.8 896.1 2092.6 896.1 2093.8 894.5C2095.0 892.9 2097.7 885.7 2099.3 882.5C2101.0 879.3 2103.3 873.7 2104.8 873.4C2106.3 873.1 2108.0 877.7 2109.4 880.7C2110.8 883.7 2112.8 890.5 2114.0 893.5C2115.2 896.5 2117.1 899.4 2117.6 900.4" fill="none" stroke="#44c6fd" stroke-width="0.950"/><path d="M320.9 894.2C321.6 895.0 323.1 898.5 325.2 899.2C327.4 900.0 333.0 899.8 335.3 899.2C337.6 898.7 338.7 895.3 340.4 895.5C342.1 895.6 344.8 900.1 346.7 900.4C348.5 900.5 348.6 897.8 353.0 897.5C357.3 897.2 370.7 898.5 375.7 898.5C380.6 898.4 383.3 896.9 385.8 897.2C388.2 897.5 390.1 900.5 392.1 900.4C394.0 899.9 397.0 893.9 398.9 893.7C400.8 893.5 402.7 899.2 404.7 899.2C406.6 899.3 409.7 894.1 411.7 894.2C413.7 894.3 416.1 899.6 418.0 899.7C419.9 899.9 422.4 895.0 424.3 895.0C426.3 895.0 429.0 900.2 431.1 899.7C433.3 899.3 436.7 893.5 438.7 891.7C440.7 889.8 442.6 887.0 444.3 887.4C446.0 887.8 448.1 893.1 450.1 894.2C452.1 895.3 455.5 894.2 457.6 895.0C459.7 895.7 461.1 898.4 463.9 899.2C466.8 900.1 473.5 900.5 476.5 900.4C479.6 899.8 482.2 897.1 484.1 895.5C486.0 893.8 487.6 888.5 489.2 889.2C490.7 889.8 491.2 898.5 494.2 900.0C497.2 900.5 505.2 899.2 509.3 899.2C513.5 899.2 519.1 900.5 521.9 900.0C524.8 899.5 526.4 896.3 528.2 896.2C530.1 896.2 532.5 899.4 534.6 899.7C536.6 900.1 539.1 898.8 542.1 898.7C545.1 898.7 551.9 899.7 554.7 899.2C557.6 898.8 559.1 896.0 561.0 896.0C562.9 896.0 565.4 898.6 567.3 899.2C569.2 899.8 571.8 900.5 573.6 900.0C575.5 899.5 578.1 896.0 579.9 896.0C581.8 896.0 580.2 899.4 586.3 900.0C592.3 900.5 614.4 900.2 620.3 900.0C626.2 899.8 623.5 898.9 625.3 898.7C627.2 898.6 630.8 899.7 632.9 899.2C635.0 898.8 637.3 895.5 639.2 895.5C641.1 895.4 643.1 898.0 645.5 898.7C648.0 899.5 653.3 900.2 655.6 900.4C657.9 900.5 659.3 900.5 660.7 900.0C662.0 899.4 662.9 896.7 664.4 896.7C666.0 896.8 668.7 899.8 670.7 900.4C672.8 900.5 676.2 900.5 678.3 900.4C680.4 899.8 682.7 896.7 684.6 896.7C686.5 896.7 688.6 899.9 690.9 900.4C693.2 900.5 697.9 900.2 700.0 900.2C702.1 900.2 703.8 900.5 705.0 900.3C706.2 900.0 707.0 898.8 707.8 898.2C708.5 897.6 709.3 896.5 710.0 896.5C710.7 896.5 711.5 897.6 712.2 898.2C713.0 898.8 711.9 900.0 715.0 900.3C718.1 900.5 729.5 900.5 733.0 900.2C736.5 899.7 736.5 898.1 738.0 897.0C739.5 895.9 741.5 892.8 743.0 892.6C744.5 892.4 746.2 894.5 748.0 895.5C749.8 896.5 752.9 898.3 755.0 899.0C757.1 899.7 719.2 900.2 762.0 900.4C804.8 900.5 997.2 900.3 1040.0 900.3C1082.8 900.3 1045.9 900.5 1047.6 900.3C1049.3 900.0 1050.2 898.6 1051.2 898.0C1052.1 897.4 1053.2 896.1 1054.1 896.1C1055.0 896.1 1056.0 897.4 1057.0 898.0C1058.0 898.6 1054.2 900.0 1060.6 900.3C1067.0 900.5 1093.1 900.5 1099.5 900.3C1105.9 900.0 1102.1 898.6 1103.1 898.0C1104.0 897.4 1105.1 896.1 1106.0 896.1C1106.9 896.1 1108.0 897.4 1108.9 898.0C1109.9 898.6 1107.1 900.0 1112.5 900.3C1117.9 900.5 1139.4 900.5 1144.8 900.3C1150.2 900.0 1147.4 898.6 1148.4 898.0C1149.3 897.4 1150.4 896.1 1151.3 896.1C1152.2 896.1 1153.2 897.4 1154.2 898.0C1155.2 898.6 1156.3 900.0 1157.8 900.3C1159.3 900.5 1162.6 900.5 1164.1 900.3C1165.6 900.0 1166.7 898.6 1167.7 898.0C1168.6 897.4 1169.7 896.1 1170.6 896.1C1171.5 896.1 1172.5 897.4 1173.5 898.0C1174.5 898.6 1172.7 900.0 1177.1 900.3C1181.5 900.5 1198.7 900.5 1203.1 900.3C1207.5 900.0 1205.7 898.6 1206.7 898.0C1207.6 897.4 1208.7 896.1 1209.6 896.1C1210.5 896.1 1211.5 897.4 1212.5 898.0C1213.5 898.6 1211.7 900.0 1216.1 900.3C1220.5 900.5 1237.6 900.5 1242.0 900.3C1246.4 900.1 1244.6 899.3 1245.6 898.9C1246.5 898.5 1247.6 897.7 1248.5 897.7C1249.4 897.7 1250.5 898.5 1251.4 898.9C1252.4 899.3 1249.6 900.1 1255.0 900.3C1260.4 900.5 1282.1 900.5 1287.5 900.3C1292.9 900.0 1290.1 898.6 1291.1 898.0C1292.0 897.4 1293.1 896.1 1294.0 896.1C1294.9 896.1 1296.0 897.4 1296.9 898.0C1297.9 898.6 1297.0 900.0 1300.5 900.3C1304.0 900.5 1316.5 900.5 1320.0 900.3C1323.5 900.0 1322.6 898.6 1323.6 898.0C1324.5 897.4 1325.6 896.1 1326.5 896.1C1327.4 896.1 1328.5 897.4 1329.4 898.0C1330.4 898.6 1331.5 900.0 1333.0 900.3C1334.5 900.5 1337.7 900.5 1339.2 900.3C1340.7 900.0 1341.8 898.6 1342.8 898.0C1343.8 897.4 1344.8 896.1 1345.7 896.1C1346.6 896.1 1347.7 897.4 1348.6 898.0C1349.6 898.6 1349.7 900.0 1352.2 900.3C1354.7 900.5 1362.8 900.5 1365.3 900.3C1367.8 900.0 1367.9 898.6 1368.9 898.0C1369.8 897.4 1370.9 896.1 1371.8 896.1C1372.7 896.1 1373.8 897.4 1374.7 898.0C1375.7 898.6 1376.0 900.0 1378.3 900.3C1380.6 900.5 1387.1 900.5 1390.0 900.2C1392.9 899.6 1395.8 896.2 1397.6 896.0C1399.4 895.8 1400.1 898.5 1402.0 899.0C1403.9 899.5 1407.8 899.8 1410.0 899.6C1412.2 899.4 1415.0 898.1 1417.0 897.8C1419.0 897.5 1421.3 897.1 1423.0 897.4C1424.7 897.7 1426.5 899.5 1428.0 899.6C1429.5 899.7 1431.7 898.9 1433.0 898.0C1434.3 897.1 1435.6 893.7 1436.8 893.8C1438.0 893.9 1439.0 897.6 1441.0 898.6C1443.0 899.6 1446.0 900.1 1450.0 900.2C1454.0 900.3 1464.0 900.1 1468.0 899.4C1472.0 898.7 1474.5 896.0 1476.6 895.6C1478.7 895.2 1480.3 896.1 1482.3 896.7C1484.3 897.3 1486.1 899.2 1490.0 899.6C1493.9 900.0 1504.3 899.8 1508.0 899.4C1511.7 899.0 1512.6 896.7 1514.4 896.7C1516.2 896.7 1517.1 898.9 1520.0 899.2C1522.9 899.5 1531.0 899.5 1534.0 899.0C1537.0 898.5 1538.1 896.1 1539.9 896.1C1541.7 896.1 1542.2 898.8 1546.0 899.2C1549.8 899.6 1560.9 899.1 1565.0 899.0C1569.1 898.9 1570.4 898.3 1573.2 898.4C1576.0 898.5 1581.1 899.9 1584.0 899.6C1586.9 899.3 1590.2 896.1 1592.5 896.1C1594.8 896.1 1597.0 899.2 1599.0 899.6C1601.0 900.0 1604.0 899.1 1606.0 898.6C1608.0 898.1 1610.3 896.1 1612.4 896.1C1614.5 896.1 1615.9 898.1 1620.0 898.6C1624.1 899.1 1635.5 899.8 1640.0 899.3C1644.5 898.8 1646.9 895.6 1649.9 895.6C1652.9 895.6 1657.3 899.1 1660.0 899.3C1662.7 899.5 1665.7 897.7 1668.0 897.0C1670.3 896.3 1672.7 894.7 1675.5 894.7C1678.3 894.7 1683.9 896.0 1686.8 896.7C1689.7 897.4 1692.7 899.9 1695.0 899.6C1697.3 899.3 1700.3 894.9 1702.4 894.7C1704.5 894.6 1706.4 897.9 1709.0 898.6C1711.6 899.3 1717.2 899.3 1720.0 899.3C1722.8 899.3 1725.9 898.4 1728.0 898.4C1730.1 898.4 1732.1 899.9 1734.0 899.6C1735.9 899.3 1738.7 896.1 1740.8 896.1C1742.9 896.1 1745.0 899.5 1748.0 899.6C1751.0 899.7 1758.0 896.7 1760.7 896.7C1763.4 896.7 1764.0 899.9 1766.0 899.6C1768.0 899.3 1771.7 894.7 1773.8 894.5C1775.9 894.3 1778.3 898.6 1780.2 898.5C1782.1 898.4 1784.5 894.6 1786.6 894.1C1788.7 893.6 1792.0 895.5 1793.9 895.4C1795.8 895.3 1797.5 892.9 1799.4 893.2C1801.3 893.5 1804.9 896.9 1806.8 897.2C1808.7 897.5 1810.5 895.0 1812.3 895.4C1814.1 895.8 1816.6 899.3 1818.7 900.0C1820.8 900.5 1823.8 900.2 1826.0 900.0C1828.2 899.8 1830.5 898.8 1833.4 898.5C1836.3 898.2 1842.6 899.4 1845.3 898.3C1848.0 897.2 1849.9 891.7 1851.7 891.3C1853.5 890.9 1855.3 894.2 1857.2 895.4C1859.1 896.6 1861.5 898.3 1864.5 899.0C1867.5 899.7 1874.5 900.5 1877.4 900.1C1880.3 899.6 1881.9 895.9 1883.8 895.9C1885.7 895.9 1887.9 899.6 1890.2 900.1C1892.5 900.5 1896.4 899.6 1899.4 899.4C1902.4 899.2 1907.9 898.4 1910.4 898.5C1912.9 898.6 1907.1 900.0 1915.9 900.3C1924.7 900.5 1960.2 900.5 1969.1 900.3C1978.0 899.7 1973.6 896.3 1975.5 896.3C1977.4 896.3 1979.9 899.4 1982.0 900.0C1984.1 900.5 1987.4 900.5 1989.3 900.0C1991.2 899.3 1993.0 895.5 1994.8 895.4C1996.6 895.2 1999.4 899.0 2001.2 899.0C2003.0 899.0 2004.8 895.3 2006.7 895.4C2008.6 895.5 2012.3 900.2 2014.0 899.6C2015.7 899.0 2016.7 893.2 2017.7 891.7C2018.7 890.2 2019.4 888.9 2020.4 889.3C2021.4 889.7 2022.6 892.9 2024.1 894.5C2025.6 896.1 2026.2 899.2 2030.5 900.0C2034.8 900.5 2048.2 900.5 2052.5 900.1C2056.8 899.3 2057.0 895.3 2058.9 894.5C2060.8 893.7 2063.9 897.1 2065.4 894.5C2066.9 891.9 2068.0 881.7 2069.0 877.0C2070.0 872.3 2071.2 863.3 2072.3 863.3C2073.4 863.3 2075.2 873.7 2076.4 877.0C2077.6 880.3 2078.6 883.5 2080.0 885.3C2081.4 887.1 2084.3 890.7 2085.5 888.9C2086.7 887.1 2087.4 879.4 2088.3 873.4C2089.2 867.4 2090.6 849.0 2091.6 849.0C2092.6 849.0 2093.7 866.0 2094.7 873.4C2095.7 880.8 2096.9 895.3 2098.4 898.1C2099.9 900.5 2103.0 892.0 2104.8 892.3C2106.6 892.6 2108.4 898.8 2110.3 900.0C2112.2 900.5 2116.5 900.3 2117.6 900.4L2117.6 900.5L321.0 900.5Z" fill="url(#gul)"/><path d="M320.9 894.2C321.6 895.0 323.1 898.5 325.2 899.2C327.4 900.0 333.0 899.8 335.3 899.2C337.6 898.7 338.7 895.3 340.4 895.5C342.1 895.6 344.8 900.1 346.7 900.4C348.5 900.5 348.6 897.8 353.0 897.5C357.3 897.2 370.7 898.5 375.7 898.5C380.6 898.4 383.3 896.9 385.8 897.2C388.2 897.5 390.1 900.5 392.1 900.4C394.0 899.9 397.0 893.9 398.9 893.7C400.8 893.5 402.7 899.2 404.7 899.2C406.6 899.3 409.7 894.1 411.7 894.2C413.7 894.3 416.1 899.6 418.0 899.7C419.9 899.9 422.4 895.0 424.3 895.0C426.3 895.0 429.0 900.2 431.1 899.7C433.3 899.3 436.7 893.5 438.7 891.7C440.7 889.8 442.6 887.0 444.3 887.4C446.0 887.8 448.1 893.1 450.1 894.2C452.1 895.3 455.5 894.2 457.6 895.0C459.7 895.7 461.1 898.4 463.9 899.2C466.8 900.1 473.5 900.5 476.5 900.4C479.6 899.8 482.2 897.1 484.1 895.5C486.0 893.8 487.6 888.5 489.2 889.2C490.7 889.8 491.2 898.5 494.2 900.0C497.2 900.5 505.2 899.2 509.3 899.2C513.5 899.2 519.1 900.5 521.9 900.0C524.8 899.5 526.4 896.3 528.2 896.2C530.1 896.2 532.5 899.4 534.6 899.7C536.6 900.1 539.1 898.8 542.1 898.7C545.1 898.7 551.9 899.7 554.7 899.2C557.6 898.8 559.1 896.0 561.0 896.0C562.9 896.0 565.4 898.6 567.3 899.2C569.2 899.8 571.8 900.5 573.6 900.0C575.5 899.5 578.1 896.0 579.9 896.0C581.8 896.0 580.2 899.4 586.3 900.0C592.3 900.5 614.4 900.2 620.3 900.0C626.2 899.8 623.5 898.9 625.3 898.7C627.2 898.6 630.8 899.7 632.9 899.2C635.0 898.8 637.3 895.5 639.2 895.5C641.1 895.4 643.1 898.0 645.5 898.7C648.0 899.5 653.3 900.2 655.6 900.4C657.9 900.5 659.3 900.5 660.7 900.0C662.0 899.4 662.9 896.7 664.4 896.7C666.0 896.8 668.7 899.8 670.7 900.4C672.8 900.5 676.2 900.5 678.3 900.4C680.4 899.8 682.7 896.7 684.6 896.7C686.5 896.7 688.6 899.9 690.9 900.4C693.2 900.5 697.9 900.2 700.0 900.2C702.1 900.2 703.8 900.5 705.0 900.3C706.2 900.0 707.0 898.8 707.8 898.2C708.5 897.6 709.3 896.5 710.0 896.5C710.7 896.5 711.5 897.6 712.2 898.2C713.0 898.8 711.9 900.0 715.0 900.3C718.1 900.5 729.5 900.5 733.0 900.2C736.5 899.7 736.5 898.1 738.0 897.0C739.5 895.9 741.5 892.8 743.0 892.6C744.5 892.4 746.2 894.5 748.0 895.5C749.8 896.5 752.9 898.3 755.0 899.0C757.1 899.7 719.2 900.2 762.0 900.4C804.8 900.5 997.2 900.3 1040.0 900.3C1082.8 900.3 1045.9 900.5 1047.6 900.3C1049.3 900.0 1050.2 898.6 1051.2 898.0C1052.1 897.4 1053.2 896.1 1054.1 896.1C1055.0 896.1 1056.0 897.4 1057.0 898.0C1058.0 898.6 1054.2 900.0 1060.6 900.3C1067.0 900.5 1093.1 900.5 1099.5 900.3C1105.9 900.0 1102.1 898.6 1103.1 898.0C1104.0 897.4 1105.1 896.1 1106.0 896.1C1106.9 896.1 1108.0 897.4 1108.9 898.0C1109.9 898.6 1107.1 900.0 1112.5 900.3C1117.9 900.5 1139.4 900.5 1144.8 900.3C1150.2 900.0 1147.4 898.6 1148.4 898.0C1149.3 897.4 1150.4 896.1 1151.3 896.1C1152.2 896.1 1153.2 897.4 1154.2 898.0C1155.2 898.6 1156.3 900.0 1157.8 900.3C1159.3 900.5 1162.6 900.5 1164.1 900.3C1165.6 900.0 1166.7 898.6 1167.7 898.0C1168.6 897.4 1169.7 896.1 1170.6 896.1C1171.5 896.1 1172.5 897.4 1173.5 898.0C1174.5 898.6 1172.7 900.0 1177.1 900.3C1181.5 900.5 1198.7 900.5 1203.1 900.3C1207.5 900.0 1205.7 898.6 1206.7 898.0C1207.6 897.4 1208.7 896.1 1209.6 896.1C1210.5 896.1 1211.5 897.4 1212.5 898.0C1213.5 898.6 1211.7 900.0 1216.1 900.3C1220.5 900.5 1237.6 900.5 1242.0 900.3C1246.4 900.1 1244.6 899.3 1245.6 898.9C1246.5 898.5 1247.6 897.7 1248.5 897.7C1249.4 897.7 1250.5 898.5 1251.4 898.9C1252.4 899.3 1249.6 900.1 1255.0 900.3C1260.4 900.5 1282.1 900.5 1287.5 900.3C1292.9 900.0 1290.1 898.6 1291.1 898.0C1292.0 897.4 1293.1 896.1 1294.0 896.1C1294.9 896.1 1296.0 897.4 1296.9 898.0C1297.9 898.6 1297.0 900.0 1300.5 900.3C1304.0 900.5 1316.5 900.5 1320.0 900.3C1323.5 900.0 1322.6 898.6 1323.6 898.0C1324.5 897.4 1325.6 896.1 1326.5 896.1C1327.4 896.1 1328.5 897.4 1329.4 898.0C1330.4 898.6 1331.5 900.0 1333.0 900.3C1334.5 900.5 1337.7 900.5 1339.2 900.3C1340.7 900.0 1341.8 898.6 1342.8 898.0C1343.8 897.4 1344.8 896.1 1345.7 896.1C1346.6 896.1 1347.7 897.4 1348.6 898.0C1349.6 898.6 1349.7 900.0 1352.2 900.3C1354.7 900.5 1362.8 900.5 1365.3 900.3C1367.8 900.0 1367.9 898.6 1368.9 898.0C1369.8 897.4 1370.9 896.1 1371.8 896.1C1372.7 896.1 1373.8 897.4 1374.7 898.0C1375.7 898.6 1376.0 900.0 1378.3 900.3C1380.6 900.5 1387.1 900.5 1390.0 900.2C1392.9 899.6 1395.8 896.2 1397.6 896.0C1399.4 895.8 1400.1 898.5 1402.0 899.0C1403.9 899.5 1407.8 899.8 1410.0 899.6C1412.2 899.4 1415.0 898.1 1417.0 897.8C1419.0 897.5 1421.3 897.1 1423.0 897.4C1424.7 897.7 1426.5 899.5 1428.0 899.6C1429.5 899.7 1431.7 898.9 1433.0 898.0C1434.3 897.1 1435.6 893.7 1436.8 893.8C1438.0 893.9 1439.0 897.6 1441.0 898.6C1443.0 899.6 1446.0 900.1 1450.0 900.2C1454.0 900.3 1464.0 900.1 1468.0 899.4C1472.0 898.7 1474.5 896.0 1476.6 895.6C1478.7 895.2 1480.3 896.1 1482.3 896.7C1484.3 897.3 1486.1 899.2 1490.0 899.6C1493.9 900.0 1504.3 899.8 1508.0 899.4C1511.7 899.0 1512.6 896.7 1514.4 896.7C1516.2 896.7 1517.1 898.9 1520.0 899.2C1522.9 899.5 1531.0 899.5 1534.0 899.0C1537.0 898.5 1538.1 896.1 1539.9 896.1C1541.7 896.1 1542.2 898.8 1546.0 899.2C1549.8 899.6 1560.9 899.1 1565.0 899.0C1569.1 898.9 1570.4 898.3 1573.2 898.4C1576.0 898.5 1581.1 899.9 1584.0 899.6C1586.9 899.3 1590.2 896.1 1592.5 896.1C1594.8 896.1 1597.0 899.2 1599.0 899.6C1601.0 900.0 1604.0 899.1 1606.0 898.6C1608.0 898.1 1610.3 896.1 1612.4 896.1C1614.5 896.1 1615.9 898.1 1620.0 898.6C1624.1 899.1 1635.5 899.8 1640.0 899.3C1644.5 898.8 1646.9 895.6 1649.9 895.6C1652.9 895.6 1657.3 899.1 1660.0 899.3C1662.7 899.5 1665.7 897.7 1668.0 897.0C1670.3 896.3 1672.7 894.7 1675.5 894.7C1678.3 894.7 1683.9 896.0 1686.8 896.7C1689.7 897.4 1692.7 899.9 1695.0 899.6C1697.3 899.3 1700.3 894.9 1702.4 894.7C1704.5 894.6 1706.4 897.9 1709.0 898.6C1711.6 899.3 1717.2 899.3 1720.0 899.3C1722.8 899.3 1725.9 898.4 1728.0 898.4C1730.1 898.4 1732.1 899.9 1734.0 899.6C1735.9 899.3 1738.7 896.1 1740.8 896.1C1742.9 896.1 1745.0 899.5 1748.0 899.6C1751.0 899.7 1758.0 896.7 1760.7 896.7C1763.4 896.7 1764.0 899.9 1766.0 899.6C1768.0 899.3 1771.7 894.7 1773.8 894.5C1775.9 894.3 1778.3 898.6 1780.2 898.5C1782.1 898.4 1784.5 894.6 1786.6 894.1C1788.7 893.6 1792.0 895.5 1793.9 895.4C1795.8 895.3 1797.5 892.9 1799.4 893.2C1801.3 893.5 1804.9 896.9 1806.8 897.2C1808.7 897.5 1810.5 895.0 1812.3 895.4C1814.1 895.8 1816.6 899.3 1818.7 900.0C1820.8 900.5 1823.8 900.2 1826.0 900.0C1828.2 899.8 1830.5 898.8 1833.4 898.5C1836.3 898.2 1842.6 899.4 1845.3 898.3C1848.0 897.2 1849.9 891.7 1851.7 891.3C1853.5 890.9 1855.3 894.2 1857.2 895.4C1859.1 896.6 1861.5 898.3 1864.5 899.0C1867.5 899.7 1874.5 900.5 1877.4 900.1C1880.3 899.6 1881.9 895.9 1883.8 895.9C1885.7 895.9 1887.9 899.6 1890.2 900.1C1892.5 900.5 1896.4 899.6 1899.4 899.4C1902.4 899.2 1907.9 898.4 1910.4 898.5C1912.9 898.6 1907.1 900.0 1915.9 900.3C1924.7 900.5 1960.2 900.5 1969.1 900.3C1978.0 899.7 1973.6 896.3 1975.5 896.3C1977.4 896.3 1979.9 899.4 1982.0 900.0C1984.1 900.5 1987.4 900.5 1989.3 900.0C1991.2 899.3 1993.0 895.5 1994.8 895.4C1996.6 895.2 1999.4 899.0 2001.2 899.0C2003.0 899.0 2004.8 895.3 2006.7 895.4C2008.6 895.5 2012.3 900.2 2014.0 899.6C2015.7 899.0 2016.7 893.2 2017.7 891.7C2018.7 890.2 2019.4 888.9 2020.4 889.3C2021.4 889.7 2022.6 892.9 2024.1 894.5C2025.6 896.1 2026.2 899.2 2030.5 900.0C2034.8 900.5 2048.2 900.5 2052.5 900.1C2056.8 899.3 2057.0 895.3 2058.9 894.5C2060.8 893.7 2063.9 897.1 2065.4 894.5C2066.9 891.9 2068.0 881.7 2069.0 877.0C2070.0 872.3 2071.2 863.3 2072.3 863.3C2073.4 863.3 2075.2 873.7 2076.4 877.0C2077.6 880.3 2078.6 883.5 2080.0 885.3C2081.4 887.1 2084.3 890.7 2085.5 888.9C2086.7 887.1 2087.4 879.4 2088.3 873.4C2089.2 867.4 2090.6 849.0 2091.6 849.0C2092.6 849.0 2093.7 866.0 2094.7 873.4C2095.7 880.8 2096.9 895.3 2098.4 898.1C2099.9 900.5 2103.0 892.0 2104.8 892.3C2106.6 892.6 2108.4 898.8 2110.3 900.0C2112.2 900.5 2116.5 900.3 2117.6 900.4" fill="none" stroke="#a451e3" stroke-width="0.950"/><circle cx="762" cy="900.700" r="6.400" fill="#fff"/><circle cx="762" cy="900.700" r="4" fill="#a451e3"/></svg>
<span class="t" style="left:298.49px;top:605px;line-height:11px;height:11px;font-size:9.8px;color:#808893;letter-spacing:-0.817px;">100</span>
<span class="t" style="left:303.39px;top:663px;line-height:11px;height:11px;font-size:9.8px;color:#808893;letter-spacing:-1.090px;">80</span>
<span class="t" style="left:303.39px;top:720px;line-height:11px;height:11px;font-size:9.8px;color:#808893;letter-spacing:-1.090px;">60</span>
<span class="t" style="left:303.39px;top:777px;line-height:11px;height:11px;font-size:9.8px;color:#808893;letter-spacing:-1.090px;">40</span>
<span class="t" style="left:303.39px;top:834px;line-height:11px;height:11px;font-size:9.8px;color:#808893;letter-spacing:-1.090px;">20</span>
<span class="t" style="left:307.75px;top:893px;line-height:11px;height:11px;font-size:9.8px;color:#808893;">0</span>
<span class="t" style="left:2126.70px;top:605px;line-height:11px;height:11px;font-size:9.8px;color:#808893;letter-spacing:-0.636px;">20.0</span>
<span class="t" style="left:2126.70px;top:663px;line-height:11px;height:11px;font-size:9.8px;color:#808893;letter-spacing:-0.636px;">16.0</span>
<span class="t" style="left:2126.70px;top:720px;line-height:11px;height:11px;font-size:9.8px;color:#808893;letter-spacing:-0.636px;">12.0</span>
<span class="t" style="left:2126.70px;top:777px;line-height:11px;height:11px;font-size:9.8px;color:#808893;letter-spacing:-0.681px;">8.0</span>
<span class="t" style="left:2126.70px;top:834px;line-height:11px;height:11px;font-size:9.8px;color:#808893;letter-spacing:-0.681px;">4.0</span>
<span class="t" style="left:2126.70px;top:893px;line-height:11px;height:11px;font-size:9.8px;color:#808893;letter-spacing:-0.681px;">0.0</span>
<span class="t" style="left:281.00px;top:748px;line-height:11px;height:11px;font-size:9.8px;color:#808893;letter-spacing:-0.326px;transform:rotate(-90deg);transform-origin:50% 42%;">Clients</span>
<span class="t" style="left:2142.90px;top:751px;line-height:11px;height:11px;font-size:9.8px;color:#808893;letter-spacing:-0.654px;transform:rotate(-90deg);transform-origin:50% 42%;">Mbps</span>
<span class="t" style="left:320.60px;top:908px;line-height:11px;height:11px;font-size:9.8px;color:#808893;letter-spacing:-0.380px;">17:00</span>
<span class="t" style="left:621.40px;top:908px;line-height:11px;height:11px;font-size:9.8px;color:#808893;letter-spacing:-0.130px;">21:00</span>
<span class="t" style="left:1246.00px;top:908px;line-height:11px;height:11px;font-size:9.8px;color:#808893;letter-spacing:-0.130px;">05:02</span>
<span class="t" style="left:1558.50px;top:908px;line-height:11px;height:11px;font-size:9.8px;color:#808893;letter-spacing:-0.130px;">09:03</span>
<span class="t" style="left:1871.00px;top:908px;line-height:11px;height:11px;font-size:9.8px;color:#808893;letter-spacing:-0.130px;">13:04</span>
<span class="t" style="left:2099.00px;top:908px;line-height:11px;height:11px;font-size:9.8px;color:#808893;letter-spacing:-0.552px;">Now</span>
<div class="a" style="left:779px;top:858px;width:240px;height:90px;border-radius:4px;background:#0c0c0d;box-shadow:0 4px 12px rgba(0,0,0,.18)"></div>
<svg style="left:772px;top:892px" width="8" height="18" viewBox="0 0 8 18"><path d="M8 2.500L1.200 9L8 15.500z" fill="#0c0c0d"/></svg>
<span class="t" style="left:791.90px;top:866px;line-height:11px;height:11px;font-size:9.8px;color:#e4e5e8;letter-spacing:-0.160px;">Date / Time</span>
<span class="t" style="left:918.30px;top:866px;line-height:11px;height:11px;font-size:9.8px;color:#c8c9cd;letter-spacing:-0.231px;">Jan 17, 22:40 - 22:45</span>
<span class="t" style="left:791.90px;top:884px;line-height:11px;height:11px;font-size:9.8px;color:#e4e5e8;letter-spacing:-0.297px;">Download</span>
<svg style="left:0;top:0" width="1" height="1"><path d="M950.5 886.2V893.7M948.3 891.5999999999999L950.5 893.8L952.7 891.5999999999999" fill="none" stroke="#44c6fd" stroke-width="1.3" stroke-linecap="round" stroke-linejoin="round"/></svg>
<span class="t" style="left:961.80px;top:884px;line-height:11px;height:11px;font-size:9.8px;color:#44c6fd;letter-spacing:-0.157px;">0.04 Mbps</span>
<span class="t" style="left:791.90px;top:903px;line-height:11px;height:11px;font-size:9.8px;color:#e4e5e8;letter-spacing:-0.371px;">Upload</span>
<svg style="left:0;top:0" width="1" height="1"><path d="M950.5 912.8V905.3M948.3 907.4000000000001L950.5 905.2L952.7 907.4000000000001" fill="none" stroke="#a451e3" stroke-width="1.3" stroke-linecap="round" stroke-linejoin="round"/></svg>
<span class="t" style="left:962.30px;top:903px;line-height:11px;height:11px;font-size:9.8px;color:#a451e3;letter-spacing:-0.220px;">0.45 Mbps</span>
<span class="t" style="left:791.90px;top:922px;line-height:11px;height:11px;font-size:9.8px;color:#e4e5e8;letter-spacing:-0.292px;">Clients</span>
<span class="t" style="left:996.10px;top:922px;line-height:11px;height:11px;font-size:9.8px;color:#e4e5e8;letter-spacing:-0.699px;">56</span>
</body></html>
